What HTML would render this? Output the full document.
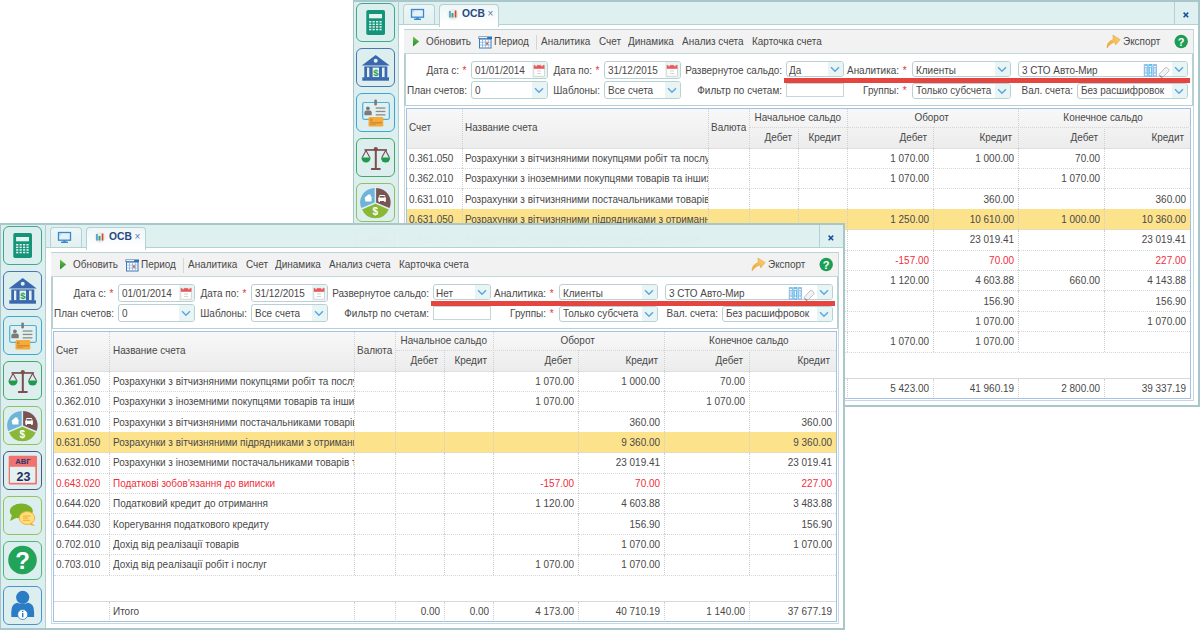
<!DOCTYPE html>
<html><head><meta charset="utf-8"><title>ОСВ</title>
<style>
html,body{margin:0;padding:0;}
body{width:1200px;height:630px;overflow:hidden;background:#fff;position:relative;font-family:"Liberation Sans",sans-serif;}
.w{position:absolute;overflow:hidden;}
.a{position:absolute;}
.t{position:absolute;white-space:nowrap;font-size:11.5px;line-height:11.5px;color:#484848;transform:scaleX(.865);transform-origin:0 0;}
svg.a{overflow:visible;}
</style></head><body>

<div class="w" style="left:353px;top:0px;width:847px;height:407px;opacity:1;">
<div class="a" style="left:46.00px;top:25.00px;width:801.00px;height:382.00px;background:#fff;"></div>
<div class="a" style="left:0.00px;top:0.00px;width:46.00px;height:407.00px;background:#dcefee;"></div>
<div class="a" style="left:0.00px;top:0.00px;width:847.00px;height:1.50px;background:#a9c6ca;"></div>
<div class="a" style="left:0.00px;top:0.00px;width:1.00px;height:407.00px;background:#a9c6ca;"></div>
<div class="a" style="left:845.00px;top:0.00px;width:2.00px;height:407.00px;background:#a9c6ca;"></div>
<div class="a" style="left:0.00px;top:405.00px;width:847.00px;height:2.00px;background:#a9c6ca;"></div>
<div class="a" style="left:45.00px;top:1.00px;width:1.00px;height:404.00px;background:#b1cfd1;"></div>
<div class="a" style="left:3px;top:3px;width:37px;height:37px;border:1.3px solid #3ea891;border-radius:6px;"></div>
<svg class="a" style="left:2px;top:2px" width="42" height="42" viewBox="0 0 42 42"><rect x="11.3" y="7.9" width="18.7" height="25.2" rx="1.8" fill="#14957a"/>
<rect x="14.1" y="12" width="12.9" height="4.3" fill="#e6f4f1"/>
<rect x="14.10" y="19.00" width="2.2" height="1.5" fill="#e6f4f1"/><rect x="17.55" y="19.00" width="2.2" height="1.5" fill="#e6f4f1"/><rect x="21.00" y="19.00" width="2.2" height="1.5" fill="#e6f4f1"/><rect x="24.45" y="19.00" width="2.2" height="1.5" fill="#e6f4f1"/><rect x="14.10" y="21.60" width="2.2" height="1.5" fill="#e6f4f1"/><rect x="17.55" y="21.60" width="2.2" height="1.5" fill="#e6f4f1"/><rect x="21.00" y="21.60" width="2.2" height="1.5" fill="#e6f4f1"/><rect x="24.45" y="21.60" width="2.2" height="1.5" fill="#e6f4f1"/><rect x="14.10" y="24.20" width="2.2" height="1.5" fill="#e6f4f1"/><rect x="17.55" y="24.20" width="2.2" height="1.5" fill="#e6f4f1"/><rect x="21.00" y="24.20" width="2.2" height="1.5" fill="#e6f4f1"/><rect x="24.45" y="24.20" width="2.2" height="1.5" fill="#e6f4f1"/><rect x="14.10" y="26.80" width="2.2" height="1.5" fill="#e6f4f1"/><rect x="17.55" y="26.80" width="2.2" height="1.5" fill="#e6f4f1"/><rect x="21.00" y="26.80" width="2.2" height="1.5" fill="#e6f4f1"/><rect x="24.45" y="26.80" width="2.2" height="1.5" fill="#e6f4f1"/></svg>
<div class="a" style="left:3px;top:48px;width:37px;height:37px;border:1.3px solid #4a76b6;border-radius:6px;"></div>
<svg class="a" style="left:2px;top:47px" width="42" height="42" viewBox="0 0 42 42"><path d="M20.7 8 L34.7 18.4 L6.8 18.4 Z" fill="#3a67ae"/>
<circle cx="20.7" cy="13.7" r="2" fill="#e2f1f0"/>
<rect x="9.3" y="19.4" width="23" height="11.4" fill="#3a67ae"/>
<rect x="12" y="20.6" width="2.3" height="9.6" fill="#e2f1f0"/>
<rect x="17.6" y="20.6" width="6.4" height="9.6" fill="#e2f1f0"/>
<rect x="27" y="20.6" width="2.6" height="9.6" fill="#e2f1f0"/>
<rect x="7.3" y="30.3" width="26.7" height="3.4" fill="#3a67ae"/>
<text x="20.9" y="28.6" font-size="9.5" font-weight="bold" text-anchor="middle" fill="#22a24a" font-family="Liberation Sans">$</text></svg>
<div class="a" style="left:3px;top:93px;width:37px;height:37px;border:1.3px solid #3aa8d4;border-radius:6px;"></div>
<svg class="a" style="left:2px;top:92px" width="42" height="42" viewBox="0 0 42 42"><rect x="7.7" y="10.5" width="26.6" height="16.8" rx="1.5" fill="#e2f1f0" stroke="#4ab0dc" stroke-width="1.2"/>
<rect x="19.3" y="7.6" width="2.6" height="5.9" rx="1.2" fill="#7a7a7a"/>
<circle cx="12.9" cy="16.3" r="1.9" fill="#7a7a7a"/>
<path d="M9.4 23.2 v-2.6 q0-2 2-2 h3.3 q2 0 2 2 v2.6z" fill="#7a7a7a"/>
<rect x="20.7" y="15.4" width="9.7" height="1.3" fill="#8a8a8a"/>
<rect x="20.7" y="18.8" width="9.7" height="1.3" fill="#8a8a8a"/>
<rect x="20.7" y="22.2" width="9.7" height="1.3" fill="#8a8a8a"/>
<rect x="13.5" y="25" width="14.8" height="9.6" rx="1.3" fill="#f6aa3a"/>
<rect x="15" y="26.7" width="2.5" height="2.5" fill="#c89040"/>
<rect x="15" y="30.4" width="12" height="0.9" fill="#b87a30"/>
<rect x="15" y="32.1" width="6" height="0.7" fill="#c88a40"/></svg>
<div class="a" style="left:3px;top:138px;width:37px;height:37px;border:1.3px solid #45a869;border-radius:6px;"></div>
<svg class="a" style="left:2px;top:137px" width="42" height="42" viewBox="0 0 42 42"><rect x="19.8" y="12" width="2" height="20" fill="#7c4e4e"/>
<path d="M9.5 12.1 H32 V13.8 H9.5z" fill="#7c4e4e"/>
<circle cx="20.8" cy="12.2" r="2.1" fill="#7c4e4e"/>
<rect x="15.8" y="30.9" width="10" height="2" rx="1" fill="#7c4e4e"/>
<path d="M11 13.4 L7.2 20.6 M11 13.4 L14.8 20.6 M30.6 13.4 L26.8 20.6 M30.6 13.4 L34.4 20.6" stroke="#7c4e4e" stroke-width="1.1" fill="none"/>
<path d="M6.4 20.6 h9.2 a4.6 5 0 0 1 -9.2 0z" fill="#1e9a4a"/>
<path d="M26 20.6 h9.2 a4.6 5 0 0 1 -9.2 0z" fill="#1e9a4a"/></svg>
<div class="a" style="left:3px;top:183px;width:37px;height:37px;border:1.3px solid #8fc15c;border-radius:6px;"></div>
<svg class="a" style="left:2px;top:182px" width="42" height="42" viewBox="0 0 42 42"><path d="M19.65 20.40 L6.30 26.07 A14.5 14.5 0 0 1 19.65 5.90 Z" fill="#6db4d8"/><path d="M21.15 20.40 L21.15 5.90 A14.5 14.5 0 0 1 34.50 26.07 Z" fill="#7a5353"/><path d="M20.40 21.80 L33.75 27.47 A14.5 14.5 0 0 1 7.05 27.47 Z" fill="#8ab836"/><path d="M9.6 15.8 l3.9-3.6 l3.9 3.6 h-0.9 v3.6 h-6z" fill="#fff"/><rect x="14.3" y="12.4" width="1.3" height="2.2" fill="#fff"/>
<path d="M23.3 16.3 l1.3-3.3 h5 l1.3 3.3 v2.8 h-7.6z" fill="#fff"/><rect x="23.6" y="18.6" width="1.4" height="1.4" fill="#fff"/><rect x="29.2" y="18.6" width="1.4" height="1.4" fill="#fff"/>
<rect x="24.6" y="14" width="5" height="1.6" fill="#7a5353"/>
<text x="20.4" y="32.6" font-size="10" font-weight="bold" text-anchor="middle" fill="#fff" font-family="Liberation Sans">$</text></svg>
<div class="a" style="left:3px;top:228px;width:37px;height:37px;border:1.3px solid #4a5682;border-radius:6px;"></div>
<svg class="a" style="left:2px;top:227px" width="42" height="42" viewBox="0 0 42 42"><rect x="6.7" y="5.8" width="28.3" height="28.6" rx="1" fill="#f27272"/>
<rect x="8" y="16.8" width="25.3" height="16" fill="#e4f1f1"/>
<text x="21" y="14.4" font-size="7" font-weight="bold" text-anchor="middle" fill="#2a3a6a" font-family="Liberation Sans" textLength="15.5" lengthAdjust="spacingAndGlyphs">АВГ</text>
<text x="21.5" y="31" font-size="12.5" font-weight="bold" text-anchor="middle" fill="#1e2e60" font-family="Liberation Sans">23</text></svg>
<div class="a" style="left:3px;top:273px;width:37px;height:37px;border:1.3px solid #92c45e;border-radius:6px;"></div>
<svg class="a" style="left:2px;top:272px" width="42" height="42" viewBox="0 0 42 42"><ellipse cx="19.3" cy="16" rx="11.5" ry="7.5" fill="#7ab22a"/>
<path d="M10 20 L8 26 L16 22z" fill="#7ab22a"/>
<ellipse cx="25" cy="23" rx="7.7" ry="6.5" fill="#fde07a" stroke="#f6a832" stroke-width="0.9"/>
<path d="M29 27.5 L33.3 31 L28 30z" fill="#f6a832"/>
<rect x="21" y="20.6" width="7.5" height="0.9" fill="#f0a030"/>
<rect x="21" y="22.6" width="5" height="0.9" fill="#f0a030"/>
<rect x="21" y="24.8" width="7" height="0.9" fill="#f0a030"/></svg>
<div class="a" style="left:3px;top:318px;width:37px;height:37px;border:1.3px solid #4cb87a;border-radius:6px;"></div>
<svg class="a" style="left:2px;top:317px" width="42" height="42" viewBox="0 0 42 42"><circle cx="20.5" cy="20" r="14.3" fill="#22a35a"/>
<text x="20.5" y="29" font-size="24" font-weight="bold" text-anchor="middle" fill="#fff" font-family="Liberation Sans">?</text></svg>
<div class="a" style="left:3px;top:363px;width:37px;height:37px;border:1.3px solid #4a92d2;border-radius:6px;"></div>
<svg class="a" style="left:2px;top:362px" width="42" height="42" viewBox="0 0 42 42"><circle cx="20.7" cy="12.3" r="6.6" fill="#2a7cc4"/>
<path d="M9.3 27 q0-8.5 6-9.3 q5.4 2.6 10.8 0 q6 0.8 6 9.3 v5 h-22.8z" fill="#2a7cc4"/>
<circle cx="20.7" cy="29.5" r="5" fill="#fff" stroke="#2a7cc4" stroke-width="0.8"/>
<rect x="20" y="28" width="1.4" height="4.3" fill="#2a7cc4"/>
<circle cx="20.7" cy="26.5" r="0.8" fill="#2a7cc4"/></svg>
<div class="a" style="left:46.00px;top:1.50px;width:799.00px;height:22.50px;background:rgba(222,240,240,0.985);"></div>
<div class="a" style="left:46.00px;top:24.00px;width:799.00px;height:1.00px;background:#b5d1d3;"></div>
<div class="a" style="left:50px;top:3.5px;width:30px;height:19.5px;border:1px solid #b5d1d3;border-bottom:none;border-radius:4px 4px 0 0;background:linear-gradient(#eef7f7,#e2f0f0);"></div>
<svg class="a" style="left:57px;top:8px" width="16" height="13" viewBox="0 0 16 13"><rect x="1.5" y="1.5" width="12" height="7.7" fill="#e6f1f5" stroke="#3a88cc" stroke-width="1.3"/><path d="M2.2 2.2 h3 l-3 3z" fill="#a8d0f0"/><rect x="6.3" y="9.5" width="2.4" height="1.5" fill="#3a88cc"/><rect x="4" y="10.6" width="7" height="1.4" rx="0.6" fill="#3a88cc"/></svg>
<div class="a" style="left:85.8px;top:3.5px;width:58.7px;height:22px;border:1px solid #b5d1d3;border-bottom:none;border-radius:4px 4px 0 0;background:linear-gradient(#eef6f7,#fff 85%);"></div>
<svg class="a" style="left:93px;top:8px" width="14" height="14" viewBox="0 0 14 14"><circle cx="7" cy="6.3" r="5.6" fill="#ececec"/><rect x="3.2" y="3" width="1.5" height="6.5" fill="#3a94c8"/><rect x="5.5" y="5" width="2" height="4.5" fill="#3aa07a"/><rect x="8.7" y="2.5" width="1.7" height="7" fill="#d84a30"/></svg>
<div class="t" style="left:108.70px;top:8.46px;font-size:10.8px;line-height:10.8px;color:#284a80;font-weight:bold;transform:scaleX(0.95);">ОСВ</div>
<div class="t" style="left:134.5px;top:9px;font-size:10px;line-height:10px;color:#5a78b8;transform:none">×</div>
<div class="a" style="left:821.00px;top:1.50px;width:1.00px;height:22.50px;background:#b5d1d3;"></div>
<svg class="a" style="left:828.5px;top:10.5px" width="8" height="8" viewBox="0 0 8 8"><path d="M1.6 1.6 L6.2 6.2 M6.2 1.6 L1.6 6.2" stroke="#1a4e9e" stroke-width="1.5"/></svg>
<div class="a" style="left:50.50px;top:29.00px;width:790.00px;height:372.00px;border:1px solid #c3d9db;box-sizing:border-box;background:#fff;"></div>
<div class="a" style="left:51.00px;top:29.00px;width:789.00px;height:25.00px;background:#f2f2f2;border-top:1px solid #bcd3d6;border-bottom:1px solid #c3d9db;box-sizing:border-box;"></div>
<div class="a" style="left:51.00px;top:54.00px;width:1.50px;height:51.00px;background:#b7d0d4;"></div>
<div class="a" style="left:839.00px;top:54.00px;width:1.50px;height:51.00px;background:#b7d0d4;"></div>
<div class="a" style="left:51.00px;top:104.50px;width:789.00px;height:1.00px;background:#b7d0d4;"></div>
<svg class="a" style="left:59px;top:36px" width="9" height="12" viewBox="0 0 9 12"><defs><linearGradient id="pg" x1="0" x2="0" y1="0" y2="1"><stop offset="0" stop-color="#6cc24a"/><stop offset="1" stop-color="#1e8a2a"/></linearGradient></defs><path d="M1 0.6 L7.2 5.6 L1 10.6z" fill="url(#pg)"/></svg>
<div class="t" style="left:72.70px;top:35.97px;">Обновить</div>
<svg class="a" style="left:124.5px;top:35.5px" width="15" height="13" viewBox="0 0 15 13"><rect x="0.5" y="0.5" width="13.5" height="2.6" fill="#2f6fb0"/><rect x="1.2" y="1.1" width="8" height="1.2" fill="#fff"/><rect x="1.5" y="3.1" width="11.5" height="8.9" fill="#fff" stroke="#3a7ab8" stroke-width="1"/><path d="M4.5 3.5 v8.4 M7.5 3.5 v8.4 M10.3 3.5 v8.4 M1.7 6.2 h11 M1.7 9 h11" stroke="#8ab0d8" stroke-width="0.8"/><rect x="8" y="6.6" width="2" height="2" fill="#e05a3a"/></svg>
<div class="t" style="left:140.90px;top:35.97px;">Период</div>
<div class="a" style="left:182.50px;top:35.00px;width:1.00px;height:15.00px;background:#d6d6d6;"></div>
<div class="t" style="left:188.40px;top:35.97px;">Аналитика</div>
<div class="t" style="left:245.50px;top:35.97px;">Счет</div>
<div class="t" style="left:274.60px;top:35.97px;">Динамика</div>
<div class="t" style="left:329.20px;top:35.97px;">Анализ счета</div>
<div class="t" style="left:398.60px;top:35.97px;">Карточка счета</div>
<svg class="a" style="left:753px;top:34px" width="16" height="15" viewBox="0 0 16 15"><defs><linearGradient id="egback" x1="0" x2="1" y1="1" y2="0"><stop offset="0" stop-color="#f0a828"/><stop offset="1" stop-color="#f8d080"/></linearGradient></defs><path d="M1.1 13.9 C0.9 9.8 3 7 7.2 5.6 L6.9 1.1 L14.2 5.6 L9.6 10.9 L8.9 8 C5.6 9 3.2 10.8 1.1 13.9Z" fill="url(#egback)" stroke="#e09a28" stroke-width="0.45"/></svg>
<div class="t" style="left:770.00px;top:35.97px;">Экспорт</div>
<svg class="a" style="left:821px;top:34px" width="15" height="15" viewBox="0 0 15 15"><circle cx="7.2" cy="7.5" r="6.7" fill="#1e9e55"/><text x="7.2" y="11.6" font-size="11" font-weight="bold" text-anchor="middle" fill="#fff" font-family="Liberation Sans">?</text></svg>
<div class="t" style="left:-94.20px;width:200px;top:64.87px;text-align:right;transform-origin:100% 0;">Дата с:</div>
<div class="t" style="left:109.50px;top:65.64px;font-size:10px;line-height:10px;color:#e8303a;transform:scaleX(1);">*</div>
<div class="a" style="left:118.10px;top:61.10px;width:76.70px;height:17.65px;border:1px solid #b9d0d4;box-sizing:border-box;border-radius:3px;background:#fff;overflow:hidden">
<div class="a" style="right:0;top:0;bottom:0;width:15px;background:#e9f4f4;"></div>
<svg class="a" style="right:2px;top:2px" width="12" height="13" viewBox="0 0 12 13"><rect x="0.8" y="1.2" width="10.6" height="11" fill="#fff" stroke="#cfcfcf" stroke-width="0.8"/><rect x="0.8" y="1.2" width="10.6" height="3.6" fill="#e85a5a"/><rect x="2.5" y="0.3" width="1.2" height="2" fill="#fff"/><rect x="8.3" y="0.3" width="1.2" height="2" fill="#fff"/><path d="M4 7 h4 M4 9.5 h4" stroke="#c8c8c8" stroke-width="0.8"/></svg>
</div>
<div class="t" style="left:121.60px;top:64.87px;">01/01/2014</div>
<div class="t" style="left:39.20px;width:200px;top:64.87px;text-align:right;transform-origin:100% 0;">Дата по:</div>
<div class="t" style="left:242.40px;top:65.64px;font-size:10px;line-height:10px;color:#e8303a;transform:scaleX(1);">*</div>
<div class="a" style="left:251.00px;top:61.10px;width:76.50px;height:17.65px;border:1px solid #b9d0d4;box-sizing:border-box;border-radius:3px;background:#fff;overflow:hidden">
<div class="a" style="right:0;top:0;bottom:0;width:15px;background:#e9f4f4;"></div>
<svg class="a" style="right:2px;top:2px" width="12" height="13" viewBox="0 0 12 13"><rect x="0.8" y="1.2" width="10.6" height="11" fill="#fff" stroke="#cfcfcf" stroke-width="0.8"/><rect x="0.8" y="1.2" width="10.6" height="3.6" fill="#e85a5a"/><rect x="2.5" y="0.3" width="1.2" height="2" fill="#fff"/><rect x="8.3" y="0.3" width="1.2" height="2" fill="#fff"/><path d="M4 7 h4 M4 9.5 h4" stroke="#c8c8c8" stroke-width="0.8"/></svg>
</div>
<div class="t" style="left:254.50px;top:64.87px;">31/12/2015</div>
<div class="t" style="left:228.50px;width:200px;top:64.87px;text-align:right;transform-origin:100% 0;">Развернутое сальдо:</div>
<div class="a" style="left:432.50px;top:61.40px;width:58.30px;height:15.80px;border:1px solid #b9d0d4;box-sizing:border-box;border-radius:3px;background:#fff;overflow:hidden">
<div class="a" style="right:0;top:0;bottom:0;width:15px;background:#e9f4f4;"></div>
<svg class="a" style="right:3px;top:3.60px" width="10" height="7" viewBox="0 0 10 7"><path d="M1 1.3 L5 5.2 L9 1.3" stroke="#5aaae0" stroke-width="1.5" fill="none"/></svg>
</div>
<div class="t" style="left:436.00px;top:64.87px;">Да</div>
<div class="t" style="left:346.00px;width:200px;top:64.87px;text-align:right;transform-origin:100% 0;">Аналитика:</div>
<div class="t" style="left:549.70px;top:65.64px;font-size:10px;line-height:10px;color:#e8303a;transform:scaleX(1);">*</div>
<div class="a" style="left:559.00px;top:61.40px;width:98.50px;height:15.80px;border:1px solid #b9d0d4;box-sizing:border-box;border-radius:3px;background:#fff;overflow:hidden">
<div class="a" style="right:0;top:0;bottom:0;width:15px;background:#e9f4f4;"></div>
<svg class="a" style="right:3px;top:3.60px" width="10" height="7" viewBox="0 0 10 7"><path d="M1 1.3 L5 5.2 L9 1.3" stroke="#5aaae0" stroke-width="1.5" fill="none"/></svg>
</div>
<div class="t" style="left:562.50px;top:64.87px;">Клиенты</div>
<div class="a" style="left:665.00px;top:61.20px;width:169.50px;height:16.10px;border:1px solid #b9d0d4;box-sizing:border-box;border-radius:3px;background:#fff;overflow:hidden">
<div class="a" style="right:0;top:0;bottom:0;width:15px;background:#e9f4f4;"></div>
<svg class="a" style="right:3px;top:3.75px" width="10" height="7" viewBox="0 0 10 7"><path d="M1 1.3 L5 5.2 L9 1.3" stroke="#5aaae0" stroke-width="1.5" fill="none"/></svg>
</div>
<div class="t" style="left:668.50px;top:64.87px;">3 СТО Авто-Мир</div>
<svg class="a" style="left:789.5px;top:62.5px" width="28" height="15" viewBox="0 0 28 15"><rect x="0.8" y="1" width="4.2" height="13" rx="0.7" fill="#94c0e8"/><rect x="5.3" y="1" width="4.2" height="13" rx="0.7" fill="#66c0ec"/><rect x="9.8" y="1" width="4.2" height="13" rx="0.7" fill="#94c0e8"/><path d="M1.8 3.6 h2.2 M6.3 3.6 h2.2 M10.8 3.6 h2.2 M2.9 5 v4.5 M7.4 5 v4.5 M11.9 5 v4.5" stroke="#fff" stroke-width="1"/><circle cx="2.9" cy="11.6" r="1" fill="#fff"/><circle cx="7.4" cy="11.6" r="1" fill="#fff"/><circle cx="11.9" cy="11.6" r="1" fill="#fff"/><path d="M16.3 11 L22 5 q1.2-1.1 2.4 0 l1.2 1.1 q1.1 1.1 0 2.3 L20 14 q-1.1 0.9 -2.2 0 l-1.4-1.3 q-0.8-0.8 -0.1-1.7z" fill="#f2f2f6" stroke="#a8a8b0" stroke-width="0.7"/><path d="M16.8 12.5 l1.2 1.2 q0.7 0.4 1.4-0.1" stroke="#555" stroke-width="0.9" fill="none"/></svg>
<div class="t" style="left:228.50px;width:200px;top:84.87px;text-align:right;transform-origin:100% 0;">Фильтр по счетам:</div>
<div class="a" style="left:432.5px;top:83px;width:58.3px;height:14px;border:1px solid #c3d6da;box-sizing:border-box;background:#fff"></div>
<div class="t" style="left:-86.20px;width:200px;top:84.87px;text-align:right;transform-origin:100% 0;">План счетов:</div>
<div class="a" style="left:118.10px;top:81.40px;width:76.70px;height:18.00px;border:1px solid #b9d0d4;box-sizing:border-box;border-radius:3px;background:#fff;overflow:hidden">
<div class="a" style="right:0;top:0;bottom:0;width:15px;background:#e9f4f4;"></div>
<svg class="a" style="right:3px;top:4.70px" width="10" height="7" viewBox="0 0 10 7"><path d="M1 1.3 L5 5.2 L9 1.3" stroke="#5aaae0" stroke-width="1.5" fill="none"/></svg>
</div>
<div class="t" style="left:121.60px;top:84.87px;">0</div>
<div class="t" style="left:46.70px;width:200px;top:84.87px;text-align:right;transform-origin:100% 0;">Шаблоны:</div>
<div class="a" style="left:251.00px;top:81.40px;width:76.50px;height:18.00px;border:1px solid #b9d0d4;box-sizing:border-box;border-radius:3px;background:#fff;overflow:hidden">
<div class="a" style="right:0;top:0;bottom:0;width:15px;background:#e9f4f4;"></div>
<svg class="a" style="right:3px;top:4.70px" width="10" height="7" viewBox="0 0 10 7"><path d="M1 1.3 L5 5.2 L9 1.3" stroke="#5aaae0" stroke-width="1.5" fill="none"/></svg>
</div>
<div class="t" style="left:254.50px;top:84.87px;">Все счета</div>
<div class="t" style="left:346.00px;width:200px;top:84.87px;text-align:right;transform-origin:100% 0;">Группы:</div>
<div class="t" style="left:549.70px;top:85.64px;font-size:10px;line-height:10px;color:#e8303a;transform:scaleX(1);">*</div>
<div class="a" style="left:559.00px;top:82.80px;width:98.50px;height:16.10px;border:1px solid #b9d0d4;box-sizing:border-box;border-radius:3px;background:#fff;overflow:hidden">
<div class="a" style="right:0;top:0;bottom:0;width:15px;background:#e9f4f4;"></div>
<svg class="a" style="right:3px;top:3.75px" width="10" height="7" viewBox="0 0 10 7"><path d="M1 1.3 L5 5.2 L9 1.3" stroke="#5aaae0" stroke-width="1.5" fill="none"/></svg>
</div>
<div class="t" style="left:562.50px;top:84.87px;">Только субсчета</div>
<div class="t" style="left:519.50px;width:200px;top:84.87px;text-align:right;transform-origin:100% 0;">Вал. счета:</div>
<div class="a" style="left:724.00px;top:82.80px;width:110.50px;height:16.70px;border:1px solid #b9d0d4;box-sizing:border-box;border-radius:3px;background:#fff;overflow:hidden">
<div class="a" style="right:0;top:0;bottom:0;width:15px;background:#e9f4f4;"></div>
<svg class="a" style="right:3px;top:4.05px" width="10" height="7" viewBox="0 0 10 7"><path d="M1 1.3 L5 5.2 L9 1.3" stroke="#5aaae0" stroke-width="1.5" fill="none"/></svg>
</div>
<div class="t" style="left:727.50px;top:84.87px;">Без расшифровок</div>
<div class="a" style="left:430.50px;top:78.00px;width:406.80px;height:4.50px;background:#e5443f;"></div>
<div class="a" style="left:52.50px;top:107.50px;width:785.80px;height:291.00px;border:1px solid #a3c0e6;box-sizing:border-box;background:#fff;"></div>
<div class="a" style="left:53.50px;top:108.50px;width:783.80px;height:39.50px;background:linear-gradient(#f8f8f8,#ececec);"></div>
<div class="a" style="left:53.50px;top:147.50px;width:783.80px;height:1.00px;background:#e0e0e0;"></div>
<div class="a" style="left:108.50px;top:108.50px;width:0;height:39.50px;border-left:1px dotted #d0d0d0;"></div>
<div class="a" style="left:354.50px;top:108.50px;width:0;height:39.50px;border-left:1px dotted #d0d0d0;"></div>
<div class="a" style="left:396.00px;top:108.50px;width:0;height:39.50px;border-left:1px dotted #d0d0d0;"></div>
<div class="a" style="left:494.00px;top:108.50px;width:0;height:39.50px;border-left:1px dotted #d0d0d0;"></div>
<div class="a" style="left:665.20px;top:108.50px;width:0;height:39.50px;border-left:1px dotted #d0d0d0;"></div>
<div class="a" style="left:445.00px;top:127.40px;width:0;height:20.60px;border-left:1px dotted #d0d0d0;"></div>
<div class="a" style="left:579.80px;top:127.40px;width:0;height:20.60px;border-left:1px dotted #d0d0d0;"></div>
<div class="a" style="left:751.20px;top:127.40px;width:0;height:20.60px;border-left:1px dotted #d0d0d0;"></div>
<div class="a" style="left:396.50px;top:126.90px;width:441.30px;height:0;border-top:1px dotted #d6d6d6;"></div>
<div class="t" style="left:55.70px;top:121.87px;">Счет</div>
<div class="t" style="left:112.20px;top:121.87px;">Название счета</div>
<div class="t" style="left:358.20px;top:122.07px;">Валюта</div>
<div class="t" style="left:395.00px;width:98.00px;top:112.47px;text-align:center;transform-origin:50% 0;">Начальное сальдо</div>
<div class="t" style="left:493.00px;width:171.20px;top:112.47px;text-align:center;transform-origin:50% 0;">Оборот</div>
<div class="t" style="left:664.20px;width:172.10px;top:112.47px;text-align:center;transform-origin:50% 0;">Конечное сальдо</div>
<div class="t" style="left:238.90px;width:200px;top:132.37px;text-align:right;transform-origin:100% 0;">Дебет</div>
<div class="t" style="left:287.90px;width:200px;top:132.37px;text-align:right;transform-origin:100% 0;">Кредит</div>
<div class="t" style="left:373.70px;width:200px;top:132.37px;text-align:right;transform-origin:100% 0;">Дебет</div>
<div class="t" style="left:459.10px;width:200px;top:132.37px;text-align:right;transform-origin:100% 0;">Кредит</div>
<div class="t" style="left:545.10px;width:200px;top:132.37px;text-align:right;transform-origin:100% 0;">Дебет</div>
<div class="t" style="left:631.20px;width:200px;top:132.37px;text-align:right;transform-origin:100% 0;">Кредит</div>
<div class="a" style="left:53.50px;top:167.90px;width:783.80px;height:0;border-top:1px dotted #d6d6d6;"></div>
<div class="a" style="left:108.50px;top:148.00px;width:0;height:20.40px;border-left:1px dotted #d0d0d0;"></div>
<div class="a" style="left:354.50px;top:148.00px;width:0;height:20.40px;border-left:1px dotted #d0d0d0;"></div>
<div class="a" style="left:396.00px;top:148.00px;width:0;height:20.40px;border-left:1px dotted #d0d0d0;"></div>
<div class="a" style="left:445.00px;top:148.00px;width:0;height:20.40px;border-left:1px dotted #d0d0d0;"></div>
<div class="a" style="left:494.00px;top:148.00px;width:0;height:20.40px;border-left:1px dotted #d0d0d0;"></div>
<div class="a" style="left:579.80px;top:148.00px;width:0;height:20.40px;border-left:1px dotted #d0d0d0;"></div>
<div class="a" style="left:665.20px;top:148.00px;width:0;height:20.40px;border-left:1px dotted #d0d0d0;"></div>
<div class="a" style="left:751.20px;top:148.00px;width:0;height:20.40px;border-left:1px dotted #d0d0d0;"></div>
<div class="a" style="left:53.50px;top:188.30px;width:783.80px;height:0;border-top:1px dotted #d6d6d6;"></div>
<div class="a" style="left:108.50px;top:168.40px;width:0;height:20.40px;border-left:1px dotted #d0d0d0;"></div>
<div class="a" style="left:354.50px;top:168.40px;width:0;height:20.40px;border-left:1px dotted #d0d0d0;"></div>
<div class="a" style="left:396.00px;top:168.40px;width:0;height:20.40px;border-left:1px dotted #d0d0d0;"></div>
<div class="a" style="left:445.00px;top:168.40px;width:0;height:20.40px;border-left:1px dotted #d0d0d0;"></div>
<div class="a" style="left:494.00px;top:168.40px;width:0;height:20.40px;border-left:1px dotted #d0d0d0;"></div>
<div class="a" style="left:579.80px;top:168.40px;width:0;height:20.40px;border-left:1px dotted #d0d0d0;"></div>
<div class="a" style="left:665.20px;top:168.40px;width:0;height:20.40px;border-left:1px dotted #d0d0d0;"></div>
<div class="a" style="left:751.20px;top:168.40px;width:0;height:20.40px;border-left:1px dotted #d0d0d0;"></div>
<div class="a" style="left:53.50px;top:208.70px;width:783.80px;height:0;border-top:1px dotted #d6d6d6;"></div>
<div class="a" style="left:108.50px;top:188.80px;width:0;height:20.40px;border-left:1px dotted #d0d0d0;"></div>
<div class="a" style="left:354.50px;top:188.80px;width:0;height:20.40px;border-left:1px dotted #d0d0d0;"></div>
<div class="a" style="left:396.00px;top:188.80px;width:0;height:20.40px;border-left:1px dotted #d0d0d0;"></div>
<div class="a" style="left:445.00px;top:188.80px;width:0;height:20.40px;border-left:1px dotted #d0d0d0;"></div>
<div class="a" style="left:494.00px;top:188.80px;width:0;height:20.40px;border-left:1px dotted #d0d0d0;"></div>
<div class="a" style="left:579.80px;top:188.80px;width:0;height:20.40px;border-left:1px dotted #d0d0d0;"></div>
<div class="a" style="left:665.20px;top:188.80px;width:0;height:20.40px;border-left:1px dotted #d0d0d0;"></div>
<div class="a" style="left:751.20px;top:188.80px;width:0;height:20.40px;border-left:1px dotted #d0d0d0;"></div>
<div class="a" style="left:53.50px;top:209.20px;width:783.80px;height:20.40px;background:#fde28c;"></div>
<div class="a" style="left:53.50px;top:229.10px;width:783.80px;height:0;border-top:1px dotted #d6d6d6;"></div>
<div class="a" style="left:108.50px;top:209.20px;width:0;height:20.40px;border-left:1px dotted #d0d0d0;"></div>
<div class="a" style="left:354.50px;top:209.20px;width:0;height:20.40px;border-left:1px dotted #d0d0d0;"></div>
<div class="a" style="left:396.00px;top:209.20px;width:0;height:20.40px;border-left:1px dotted #d0d0d0;"></div>
<div class="a" style="left:445.00px;top:209.20px;width:0;height:20.40px;border-left:1px dotted #d0d0d0;"></div>
<div class="a" style="left:494.00px;top:209.20px;width:0;height:20.40px;border-left:1px dotted #d0d0d0;"></div>
<div class="a" style="left:579.80px;top:209.20px;width:0;height:20.40px;border-left:1px dotted #d0d0d0;"></div>
<div class="a" style="left:665.20px;top:209.20px;width:0;height:20.40px;border-left:1px dotted #d0d0d0;"></div>
<div class="a" style="left:751.20px;top:209.20px;width:0;height:20.40px;border-left:1px dotted #d0d0d0;"></div>
<div class="a" style="left:53.50px;top:249.50px;width:783.80px;height:0;border-top:1px dotted #d6d6d6;"></div>
<div class="a" style="left:108.50px;top:229.60px;width:0;height:20.40px;border-left:1px dotted #d0d0d0;"></div>
<div class="a" style="left:354.50px;top:229.60px;width:0;height:20.40px;border-left:1px dotted #d0d0d0;"></div>
<div class="a" style="left:396.00px;top:229.60px;width:0;height:20.40px;border-left:1px dotted #d0d0d0;"></div>
<div class="a" style="left:445.00px;top:229.60px;width:0;height:20.40px;border-left:1px dotted #d0d0d0;"></div>
<div class="a" style="left:494.00px;top:229.60px;width:0;height:20.40px;border-left:1px dotted #d0d0d0;"></div>
<div class="a" style="left:579.80px;top:229.60px;width:0;height:20.40px;border-left:1px dotted #d0d0d0;"></div>
<div class="a" style="left:665.20px;top:229.60px;width:0;height:20.40px;border-left:1px dotted #d0d0d0;"></div>
<div class="a" style="left:751.20px;top:229.60px;width:0;height:20.40px;border-left:1px dotted #d0d0d0;"></div>
<div class="a" style="left:53.50px;top:269.90px;width:783.80px;height:0;border-top:1px dotted #d6d6d6;"></div>
<div class="a" style="left:108.50px;top:250.00px;width:0;height:20.40px;border-left:1px dotted #d0d0d0;"></div>
<div class="a" style="left:354.50px;top:250.00px;width:0;height:20.40px;border-left:1px dotted #d0d0d0;"></div>
<div class="a" style="left:396.00px;top:250.00px;width:0;height:20.40px;border-left:1px dotted #d0d0d0;"></div>
<div class="a" style="left:445.00px;top:250.00px;width:0;height:20.40px;border-left:1px dotted #d0d0d0;"></div>
<div class="a" style="left:494.00px;top:250.00px;width:0;height:20.40px;border-left:1px dotted #d0d0d0;"></div>
<div class="a" style="left:579.80px;top:250.00px;width:0;height:20.40px;border-left:1px dotted #d0d0d0;"></div>
<div class="a" style="left:665.20px;top:250.00px;width:0;height:20.40px;border-left:1px dotted #d0d0d0;"></div>
<div class="a" style="left:751.20px;top:250.00px;width:0;height:20.40px;border-left:1px dotted #d0d0d0;"></div>
<div class="a" style="left:53.50px;top:290.30px;width:783.80px;height:0;border-top:1px dotted #d6d6d6;"></div>
<div class="a" style="left:108.50px;top:270.40px;width:0;height:20.40px;border-left:1px dotted #d0d0d0;"></div>
<div class="a" style="left:354.50px;top:270.40px;width:0;height:20.40px;border-left:1px dotted #d0d0d0;"></div>
<div class="a" style="left:396.00px;top:270.40px;width:0;height:20.40px;border-left:1px dotted #d0d0d0;"></div>
<div class="a" style="left:445.00px;top:270.40px;width:0;height:20.40px;border-left:1px dotted #d0d0d0;"></div>
<div class="a" style="left:494.00px;top:270.40px;width:0;height:20.40px;border-left:1px dotted #d0d0d0;"></div>
<div class="a" style="left:579.80px;top:270.40px;width:0;height:20.40px;border-left:1px dotted #d0d0d0;"></div>
<div class="a" style="left:665.20px;top:270.40px;width:0;height:20.40px;border-left:1px dotted #d0d0d0;"></div>
<div class="a" style="left:751.20px;top:270.40px;width:0;height:20.40px;border-left:1px dotted #d0d0d0;"></div>
<div class="a" style="left:53.50px;top:310.70px;width:783.80px;height:0;border-top:1px dotted #d6d6d6;"></div>
<div class="a" style="left:108.50px;top:290.80px;width:0;height:20.40px;border-left:1px dotted #d0d0d0;"></div>
<div class="a" style="left:354.50px;top:290.80px;width:0;height:20.40px;border-left:1px dotted #d0d0d0;"></div>
<div class="a" style="left:396.00px;top:290.80px;width:0;height:20.40px;border-left:1px dotted #d0d0d0;"></div>
<div class="a" style="left:445.00px;top:290.80px;width:0;height:20.40px;border-left:1px dotted #d0d0d0;"></div>
<div class="a" style="left:494.00px;top:290.80px;width:0;height:20.40px;border-left:1px dotted #d0d0d0;"></div>
<div class="a" style="left:579.80px;top:290.80px;width:0;height:20.40px;border-left:1px dotted #d0d0d0;"></div>
<div class="a" style="left:665.20px;top:290.80px;width:0;height:20.40px;border-left:1px dotted #d0d0d0;"></div>
<div class="a" style="left:751.20px;top:290.80px;width:0;height:20.40px;border-left:1px dotted #d0d0d0;"></div>
<div class="a" style="left:53.50px;top:331.10px;width:783.80px;height:0;border-top:1px dotted #d6d6d6;"></div>
<div class="a" style="left:108.50px;top:311.20px;width:0;height:20.40px;border-left:1px dotted #d0d0d0;"></div>
<div class="a" style="left:354.50px;top:311.20px;width:0;height:20.40px;border-left:1px dotted #d0d0d0;"></div>
<div class="a" style="left:396.00px;top:311.20px;width:0;height:20.40px;border-left:1px dotted #d0d0d0;"></div>
<div class="a" style="left:445.00px;top:311.20px;width:0;height:20.40px;border-left:1px dotted #d0d0d0;"></div>
<div class="a" style="left:494.00px;top:311.20px;width:0;height:20.40px;border-left:1px dotted #d0d0d0;"></div>
<div class="a" style="left:579.80px;top:311.20px;width:0;height:20.40px;border-left:1px dotted #d0d0d0;"></div>
<div class="a" style="left:665.20px;top:311.20px;width:0;height:20.40px;border-left:1px dotted #d0d0d0;"></div>
<div class="a" style="left:751.20px;top:311.20px;width:0;height:20.40px;border-left:1px dotted #d0d0d0;"></div>
<div class="a" style="left:53.50px;top:351.50px;width:783.80px;height:0;border-top:1px dotted #d6d6d6;"></div>
<div class="a" style="left:108.50px;top:331.60px;width:0;height:20.40px;border-left:1px dotted #d0d0d0;"></div>
<div class="a" style="left:354.50px;top:331.60px;width:0;height:20.40px;border-left:1px dotted #d0d0d0;"></div>
<div class="a" style="left:396.00px;top:331.60px;width:0;height:20.40px;border-left:1px dotted #d0d0d0;"></div>
<div class="a" style="left:445.00px;top:331.60px;width:0;height:20.40px;border-left:1px dotted #d0d0d0;"></div>
<div class="a" style="left:494.00px;top:331.60px;width:0;height:20.40px;border-left:1px dotted #d0d0d0;"></div>
<div class="a" style="left:579.80px;top:331.60px;width:0;height:20.40px;border-left:1px dotted #d0d0d0;"></div>
<div class="a" style="left:665.20px;top:331.60px;width:0;height:20.40px;border-left:1px dotted #d0d0d0;"></div>
<div class="a" style="left:751.20px;top:331.60px;width:0;height:20.40px;border-left:1px dotted #d0d0d0;"></div>
<div class="t" style="left:55.70px;top:152.87px;">0.361.050</div>
<div class="a" style="left:109.00px;top:148.00px;width:245.50px;height:20.40px;overflow:hidden">
<div class="t" style="left:3.20px;top:4.87px;">Розрахунки з вітчизняними покупцями робіт та послуг</div>
</div>
<div class="t" style="left:375.70px;width:200px;top:152.87px;text-align:right;transform-origin:100% 0;">1 070.00</div>
<div class="t" style="left:461.10px;width:200px;top:152.87px;text-align:right;transform-origin:100% 0;">1 000.00</div>
<div class="t" style="left:547.10px;width:200px;top:152.87px;text-align:right;transform-origin:100% 0;">70.00</div>
<div class="t" style="left:55.70px;top:173.27px;">0.362.010</div>
<div class="a" style="left:109.00px;top:168.40px;width:245.50px;height:20.40px;overflow:hidden">
<div class="t" style="left:3.20px;top:4.87px;">Розрахунки з іноземними покупцями товарів та інших</div>
</div>
<div class="t" style="left:375.70px;width:200px;top:173.27px;text-align:right;transform-origin:100% 0;">1 070.00</div>
<div class="t" style="left:547.10px;width:200px;top:173.27px;text-align:right;transform-origin:100% 0;">1 070.00</div>
<div class="t" style="left:55.70px;top:193.67px;">0.631.010</div>
<div class="a" style="left:109.00px;top:188.80px;width:245.50px;height:20.40px;overflow:hidden">
<div class="t" style="left:3.20px;top:4.87px;">Розрахунки з вітчизняними постачальниками товарів</div>
</div>
<div class="t" style="left:461.10px;width:200px;top:193.67px;text-align:right;transform-origin:100% 0;">360.00</div>
<div class="t" style="left:633.20px;width:200px;top:193.67px;text-align:right;transform-origin:100% 0;">360.00</div>
<div class="t" style="left:55.70px;top:214.07px;">0.631.050</div>
<div class="a" style="left:109.00px;top:209.20px;width:245.50px;height:20.40px;overflow:hidden">
<div class="t" style="left:3.20px;top:4.87px;">Розрахунки з вітчизняними підрядниками з отримання</div>
</div>
<div class="t" style="left:375.70px;width:200px;top:214.07px;text-align:right;transform-origin:100% 0;">1 250.00</div>
<div class="t" style="left:461.10px;width:200px;top:214.07px;text-align:right;transform-origin:100% 0;">10 610.00</div>
<div class="t" style="left:547.10px;width:200px;top:214.07px;text-align:right;transform-origin:100% 0;">1 000.00</div>
<div class="t" style="left:633.20px;width:200px;top:214.07px;text-align:right;transform-origin:100% 0;">10 360.00</div>
<div class="t" style="left:55.70px;top:234.47px;">0.632.010</div>
<div class="a" style="left:109.00px;top:229.60px;width:245.50px;height:20.40px;overflow:hidden">
<div class="t" style="left:3.20px;top:4.87px;">Розрахунки з іноземними постачальниками товарів та</div>
</div>
<div class="t" style="left:461.10px;width:200px;top:234.47px;text-align:right;transform-origin:100% 0;">23 019.41</div>
<div class="t" style="left:633.20px;width:200px;top:234.47px;text-align:right;transform-origin:100% 0;">23 019.41</div>
<div class="t" style="left:55.70px;top:254.87px;color:#ee2f3c;">0.643.020</div>
<div class="a" style="left:109.00px;top:250.00px;width:245.50px;height:20.40px;overflow:hidden">
<div class="t" style="left:3.20px;top:4.87px;color:#ee2f3c;">Податкові зобов'язання до виписки</div>
</div>
<div class="t" style="left:375.70px;width:200px;top:254.87px;text-align:right;transform-origin:100% 0;color:#ee2f3c;">-157.00</div>
<div class="t" style="left:461.10px;width:200px;top:254.87px;text-align:right;transform-origin:100% 0;color:#ee2f3c;">70.00</div>
<div class="t" style="left:633.20px;width:200px;top:254.87px;text-align:right;transform-origin:100% 0;color:#ee2f3c;">227.00</div>
<div class="t" style="left:55.70px;top:275.27px;">0.644.020</div>
<div class="a" style="left:109.00px;top:270.40px;width:245.50px;height:20.40px;overflow:hidden">
<div class="t" style="left:3.20px;top:4.87px;">Податковий кредит до отримання</div>
</div>
<div class="t" style="left:375.70px;width:200px;top:275.27px;text-align:right;transform-origin:100% 0;">1 120.00</div>
<div class="t" style="left:461.10px;width:200px;top:275.27px;text-align:right;transform-origin:100% 0;">4 603.88</div>
<div class="t" style="left:547.10px;width:200px;top:275.27px;text-align:right;transform-origin:100% 0;">660.00</div>
<div class="t" style="left:633.20px;width:200px;top:275.27px;text-align:right;transform-origin:100% 0;">4 143.88</div>
<div class="t" style="left:55.70px;top:295.67px;">0.644.030</div>
<div class="a" style="left:109.00px;top:290.80px;width:245.50px;height:20.40px;overflow:hidden">
<div class="t" style="left:3.20px;top:4.87px;">Корегування податкового кредиту</div>
</div>
<div class="t" style="left:461.10px;width:200px;top:295.67px;text-align:right;transform-origin:100% 0;">156.90</div>
<div class="t" style="left:633.20px;width:200px;top:295.67px;text-align:right;transform-origin:100% 0;">156.90</div>
<div class="t" style="left:55.70px;top:316.07px;">0.702.010</div>
<div class="a" style="left:109.00px;top:311.20px;width:245.50px;height:20.40px;overflow:hidden">
<div class="t" style="left:3.20px;top:4.87px;">Дохід від реалізації товарів</div>
</div>
<div class="t" style="left:461.10px;width:200px;top:316.07px;text-align:right;transform-origin:100% 0;">1 070.00</div>
<div class="t" style="left:633.20px;width:200px;top:316.07px;text-align:right;transform-origin:100% 0;">1 070.00</div>
<div class="t" style="left:55.70px;top:336.47px;">0.703.010</div>
<div class="a" style="left:109.00px;top:331.60px;width:245.50px;height:20.40px;overflow:hidden">
<div class="t" style="left:3.20px;top:4.87px;">Дохід від реалізації робіт і послуг</div>
</div>
<div class="t" style="left:375.70px;width:200px;top:336.47px;text-align:right;transform-origin:100% 0;">1 070.00</div>
<div class="t" style="left:461.10px;width:200px;top:336.47px;text-align:right;transform-origin:100% 0;">1 070.00</div>
<div class="a" style="left:53.50px;top:377.80px;width:783.80px;height:1.00px;background:#d9d9d9;"></div>
<div class="a" style="left:108.50px;top:378.80px;width:0;height:18.70px;border-left:1px dotted #d0d0d0;"></div>
<div class="a" style="left:354.50px;top:378.80px;width:0;height:18.70px;border-left:1px dotted #d0d0d0;"></div>
<div class="a" style="left:396.00px;top:378.80px;width:0;height:18.70px;border-left:1px dotted #d0d0d0;"></div>
<div class="a" style="left:445.00px;top:378.80px;width:0;height:18.70px;border-left:1px dotted #d0d0d0;"></div>
<div class="a" style="left:494.00px;top:378.80px;width:0;height:18.70px;border-left:1px dotted #d0d0d0;"></div>
<div class="a" style="left:579.80px;top:378.80px;width:0;height:18.70px;border-left:1px dotted #d0d0d0;"></div>
<div class="a" style="left:665.20px;top:378.80px;width:0;height:18.70px;border-left:1px dotted #d0d0d0;"></div>
<div class="a" style="left:751.20px;top:378.80px;width:0;height:18.70px;border-left:1px dotted #d0d0d0;"></div>
<div class="t" style="left:112.20px;top:383.17px;">Итого</div>
<div class="t" style="left:240.90px;width:200px;top:383.17px;text-align:right;transform-origin:100% 0;">0.00</div>
<div class="t" style="left:289.90px;width:200px;top:383.17px;text-align:right;transform-origin:100% 0;">0.00</div>
<div class="t" style="left:375.70px;width:200px;top:383.17px;text-align:right;transform-origin:100% 0;">5 423.00</div>
<div class="t" style="left:461.10px;width:200px;top:383.17px;text-align:right;transform-origin:100% 0;">41 960.19</div>
<div class="t" style="left:547.10px;width:200px;top:383.17px;text-align:right;transform-origin:100% 0;">2 800.00</div>
<div class="t" style="left:633.20px;width:200px;top:383.17px;text-align:right;transform-origin:100% 0;">39 337.19</div>
</div>
<div class="w" style="left:0px;top:223px;width:845px;height:407px;opacity:1;">
<div class="a" style="left:46.00px;top:25.00px;width:799.00px;height:382.00px;background:#fff;"></div>
<div class="a" style="left:0.00px;top:0.00px;width:46.00px;height:407.00px;background:#dcefee;"></div>
<div class="a" style="left:0.00px;top:0.00px;width:845.00px;height:1.50px;background:#a9c6ca;"></div>
<div class="a" style="left:0.00px;top:0.00px;width:1.00px;height:407.00px;background:#a9c6ca;"></div>
<div class="a" style="left:843.00px;top:0.00px;width:2.00px;height:407.00px;background:#a9c6ca;"></div>
<div class="a" style="left:0.00px;top:405.00px;width:845.00px;height:2.00px;background:#a9c6ca;"></div>
<div class="a" style="left:45.00px;top:1.00px;width:1.00px;height:404.00px;background:#b1cfd1;"></div>
<div class="a" style="left:3px;top:3px;width:37px;height:37px;border:1.3px solid #3ea891;border-radius:6px;"></div>
<svg class="a" style="left:2px;top:2px" width="42" height="42" viewBox="0 0 42 42"><rect x="11.3" y="7.9" width="18.7" height="25.2" rx="1.8" fill="#14957a"/>
<rect x="14.1" y="12" width="12.9" height="4.3" fill="#e6f4f1"/>
<rect x="14.10" y="19.00" width="2.2" height="1.5" fill="#e6f4f1"/><rect x="17.55" y="19.00" width="2.2" height="1.5" fill="#e6f4f1"/><rect x="21.00" y="19.00" width="2.2" height="1.5" fill="#e6f4f1"/><rect x="24.45" y="19.00" width="2.2" height="1.5" fill="#e6f4f1"/><rect x="14.10" y="21.60" width="2.2" height="1.5" fill="#e6f4f1"/><rect x="17.55" y="21.60" width="2.2" height="1.5" fill="#e6f4f1"/><rect x="21.00" y="21.60" width="2.2" height="1.5" fill="#e6f4f1"/><rect x="24.45" y="21.60" width="2.2" height="1.5" fill="#e6f4f1"/><rect x="14.10" y="24.20" width="2.2" height="1.5" fill="#e6f4f1"/><rect x="17.55" y="24.20" width="2.2" height="1.5" fill="#e6f4f1"/><rect x="21.00" y="24.20" width="2.2" height="1.5" fill="#e6f4f1"/><rect x="24.45" y="24.20" width="2.2" height="1.5" fill="#e6f4f1"/><rect x="14.10" y="26.80" width="2.2" height="1.5" fill="#e6f4f1"/><rect x="17.55" y="26.80" width="2.2" height="1.5" fill="#e6f4f1"/><rect x="21.00" y="26.80" width="2.2" height="1.5" fill="#e6f4f1"/><rect x="24.45" y="26.80" width="2.2" height="1.5" fill="#e6f4f1"/></svg>
<div class="a" style="left:3px;top:48px;width:37px;height:37px;border:1.3px solid #4a76b6;border-radius:6px;"></div>
<svg class="a" style="left:2px;top:47px" width="42" height="42" viewBox="0 0 42 42"><path d="M20.7 8 L34.7 18.4 L6.8 18.4 Z" fill="#3a67ae"/>
<circle cx="20.7" cy="13.7" r="2" fill="#e2f1f0"/>
<rect x="9.3" y="19.4" width="23" height="11.4" fill="#3a67ae"/>
<rect x="12" y="20.6" width="2.3" height="9.6" fill="#e2f1f0"/>
<rect x="17.6" y="20.6" width="6.4" height="9.6" fill="#e2f1f0"/>
<rect x="27" y="20.6" width="2.6" height="9.6" fill="#e2f1f0"/>
<rect x="7.3" y="30.3" width="26.7" height="3.4" fill="#3a67ae"/>
<text x="20.9" y="28.6" font-size="9.5" font-weight="bold" text-anchor="middle" fill="#22a24a" font-family="Liberation Sans">$</text></svg>
<div class="a" style="left:3px;top:93px;width:37px;height:37px;border:1.3px solid #3aa8d4;border-radius:6px;"></div>
<svg class="a" style="left:2px;top:92px" width="42" height="42" viewBox="0 0 42 42"><rect x="7.7" y="10.5" width="26.6" height="16.8" rx="1.5" fill="#e2f1f0" stroke="#4ab0dc" stroke-width="1.2"/>
<rect x="19.3" y="7.6" width="2.6" height="5.9" rx="1.2" fill="#7a7a7a"/>
<circle cx="12.9" cy="16.3" r="1.9" fill="#7a7a7a"/>
<path d="M9.4 23.2 v-2.6 q0-2 2-2 h3.3 q2 0 2 2 v2.6z" fill="#7a7a7a"/>
<rect x="20.7" y="15.4" width="9.7" height="1.3" fill="#8a8a8a"/>
<rect x="20.7" y="18.8" width="9.7" height="1.3" fill="#8a8a8a"/>
<rect x="20.7" y="22.2" width="9.7" height="1.3" fill="#8a8a8a"/>
<rect x="13.5" y="25" width="14.8" height="9.6" rx="1.3" fill="#f6aa3a"/>
<rect x="15" y="26.7" width="2.5" height="2.5" fill="#c89040"/>
<rect x="15" y="30.4" width="12" height="0.9" fill="#b87a30"/>
<rect x="15" y="32.1" width="6" height="0.7" fill="#c88a40"/></svg>
<div class="a" style="left:3px;top:138px;width:37px;height:37px;border:1.3px solid #45a869;border-radius:6px;"></div>
<svg class="a" style="left:2px;top:137px" width="42" height="42" viewBox="0 0 42 42"><rect x="19.8" y="12" width="2" height="20" fill="#7c4e4e"/>
<path d="M9.5 12.1 H32 V13.8 H9.5z" fill="#7c4e4e"/>
<circle cx="20.8" cy="12.2" r="2.1" fill="#7c4e4e"/>
<rect x="15.8" y="30.9" width="10" height="2" rx="1" fill="#7c4e4e"/>
<path d="M11 13.4 L7.2 20.6 M11 13.4 L14.8 20.6 M30.6 13.4 L26.8 20.6 M30.6 13.4 L34.4 20.6" stroke="#7c4e4e" stroke-width="1.1" fill="none"/>
<path d="M6.4 20.6 h9.2 a4.6 5 0 0 1 -9.2 0z" fill="#1e9a4a"/>
<path d="M26 20.6 h9.2 a4.6 5 0 0 1 -9.2 0z" fill="#1e9a4a"/></svg>
<div class="a" style="left:3px;top:183px;width:37px;height:37px;border:1.3px solid #8fc15c;border-radius:6px;"></div>
<svg class="a" style="left:2px;top:182px" width="42" height="42" viewBox="0 0 42 42"><path d="M19.65 20.40 L6.30 26.07 A14.5 14.5 0 0 1 19.65 5.90 Z" fill="#6db4d8"/><path d="M21.15 20.40 L21.15 5.90 A14.5 14.5 0 0 1 34.50 26.07 Z" fill="#7a5353"/><path d="M20.40 21.80 L33.75 27.47 A14.5 14.5 0 0 1 7.05 27.47 Z" fill="#8ab836"/><path d="M9.6 15.8 l3.9-3.6 l3.9 3.6 h-0.9 v3.6 h-6z" fill="#fff"/><rect x="14.3" y="12.4" width="1.3" height="2.2" fill="#fff"/>
<path d="M23.3 16.3 l1.3-3.3 h5 l1.3 3.3 v2.8 h-7.6z" fill="#fff"/><rect x="23.6" y="18.6" width="1.4" height="1.4" fill="#fff"/><rect x="29.2" y="18.6" width="1.4" height="1.4" fill="#fff"/>
<rect x="24.6" y="14" width="5" height="1.6" fill="#7a5353"/>
<text x="20.4" y="32.6" font-size="10" font-weight="bold" text-anchor="middle" fill="#fff" font-family="Liberation Sans">$</text></svg>
<div class="a" style="left:3px;top:228px;width:37px;height:37px;border:1.3px solid #4a5682;border-radius:6px;"></div>
<svg class="a" style="left:2px;top:227px" width="42" height="42" viewBox="0 0 42 42"><rect x="6.7" y="5.8" width="28.3" height="28.6" rx="1" fill="#f27272"/>
<rect x="8" y="16.8" width="25.3" height="16" fill="#e4f1f1"/>
<text x="21" y="14.4" font-size="7" font-weight="bold" text-anchor="middle" fill="#2a3a6a" font-family="Liberation Sans" textLength="15.5" lengthAdjust="spacingAndGlyphs">АВГ</text>
<text x="21.5" y="31" font-size="12.5" font-weight="bold" text-anchor="middle" fill="#1e2e60" font-family="Liberation Sans">23</text></svg>
<div class="a" style="left:3px;top:273px;width:37px;height:37px;border:1.3px solid #92c45e;border-radius:6px;"></div>
<svg class="a" style="left:2px;top:272px" width="42" height="42" viewBox="0 0 42 42"><ellipse cx="19.3" cy="16" rx="11.5" ry="7.5" fill="#7ab22a"/>
<path d="M10 20 L8 26 L16 22z" fill="#7ab22a"/>
<ellipse cx="25" cy="23" rx="7.7" ry="6.5" fill="#fde07a" stroke="#f6a832" stroke-width="0.9"/>
<path d="M29 27.5 L33.3 31 L28 30z" fill="#f6a832"/>
<rect x="21" y="20.6" width="7.5" height="0.9" fill="#f0a030"/>
<rect x="21" y="22.6" width="5" height="0.9" fill="#f0a030"/>
<rect x="21" y="24.8" width="7" height="0.9" fill="#f0a030"/></svg>
<div class="a" style="left:3px;top:318px;width:37px;height:37px;border:1.3px solid #4cb87a;border-radius:6px;"></div>
<svg class="a" style="left:2px;top:317px" width="42" height="42" viewBox="0 0 42 42"><circle cx="20.5" cy="20" r="14.3" fill="#22a35a"/>
<text x="20.5" y="29" font-size="24" font-weight="bold" text-anchor="middle" fill="#fff" font-family="Liberation Sans">?</text></svg>
<div class="a" style="left:3px;top:363px;width:37px;height:37px;border:1.3px solid #4a92d2;border-radius:6px;"></div>
<svg class="a" style="left:2px;top:362px" width="42" height="42" viewBox="0 0 42 42"><circle cx="20.7" cy="12.3" r="6.6" fill="#2a7cc4"/>
<path d="M9.3 27 q0-8.5 6-9.3 q5.4 2.6 10.8 0 q6 0.8 6 9.3 v5 h-22.8z" fill="#2a7cc4"/>
<circle cx="20.7" cy="29.5" r="5" fill="#fff" stroke="#2a7cc4" stroke-width="0.8"/>
<rect x="20" y="28" width="1.4" height="4.3" fill="#2a7cc4"/>
<circle cx="20.7" cy="26.5" r="0.8" fill="#2a7cc4"/></svg>
<div class="a" style="left:46.00px;top:1.50px;width:797.00px;height:22.50px;background:rgba(222,240,240,0.985);"></div>
<div class="a" style="left:46.00px;top:24.00px;width:797.00px;height:1.00px;background:#b5d1d3;"></div>
<div class="a" style="left:50px;top:3.5px;width:30px;height:19.5px;border:1px solid #b5d1d3;border-bottom:none;border-radius:4px 4px 0 0;background:linear-gradient(#eef7f7,#e2f0f0);"></div>
<svg class="a" style="left:57px;top:8px" width="16" height="13" viewBox="0 0 16 13"><rect x="1.5" y="1.5" width="12" height="7.7" fill="#e6f1f5" stroke="#3a88cc" stroke-width="1.3"/><path d="M2.2 2.2 h3 l-3 3z" fill="#a8d0f0"/><rect x="6.3" y="9.5" width="2.4" height="1.5" fill="#3a88cc"/><rect x="4" y="10.6" width="7" height="1.4" rx="0.6" fill="#3a88cc"/></svg>
<div class="a" style="left:85.8px;top:3.5px;width:58.7px;height:22px;border:1px solid #b5d1d3;border-bottom:none;border-radius:4px 4px 0 0;background:linear-gradient(#eef6f7,#fff 85%);"></div>
<svg class="a" style="left:93px;top:8px" width="14" height="14" viewBox="0 0 14 14"><circle cx="7" cy="6.3" r="5.6" fill="#ececec"/><rect x="3.2" y="3" width="1.5" height="6.5" fill="#3a94c8"/><rect x="5.5" y="5" width="2" height="4.5" fill="#3aa07a"/><rect x="8.7" y="2.5" width="1.7" height="7" fill="#d84a30"/></svg>
<div class="t" style="left:108.70px;top:8.46px;font-size:10.8px;line-height:10.8px;color:#284a80;font-weight:bold;transform:scaleX(0.95);">ОСВ</div>
<div class="t" style="left:134.5px;top:9px;font-size:10px;line-height:10px;color:#5a78b8;transform:none">×</div>
<div class="a" style="left:819.00px;top:1.50px;width:1.00px;height:22.50px;background:#b5d1d3;"></div>
<svg class="a" style="left:826.5px;top:10.5px" width="8" height="8" viewBox="0 0 8 8"><path d="M1.6 1.6 L6.2 6.2 M6.2 1.6 L1.6 6.2" stroke="#1a4e9e" stroke-width="1.5"/></svg>
<div class="a" style="left:50.50px;top:29.00px;width:788.00px;height:372.00px;border:1px solid #c3d9db;box-sizing:border-box;background:#fff;"></div>
<div class="a" style="left:51.00px;top:29.00px;width:787.00px;height:25.00px;background:#f2f2f2;border-top:1px solid #bcd3d6;border-bottom:1px solid #c3d9db;box-sizing:border-box;"></div>
<div class="a" style="left:51.00px;top:54.00px;width:1.50px;height:51.00px;background:#b7d0d4;"></div>
<div class="a" style="left:837.00px;top:54.00px;width:1.50px;height:51.00px;background:#b7d0d4;"></div>
<div class="a" style="left:51.00px;top:104.50px;width:787.00px;height:1.00px;background:#b7d0d4;"></div>
<svg class="a" style="left:59px;top:36px" width="9" height="12" viewBox="0 0 9 12"><defs><linearGradient id="pg" x1="0" x2="0" y1="0" y2="1"><stop offset="0" stop-color="#6cc24a"/><stop offset="1" stop-color="#1e8a2a"/></linearGradient></defs><path d="M1 0.6 L7.2 5.6 L1 10.6z" fill="url(#pg)"/></svg>
<div class="t" style="left:72.70px;top:35.97px;">Обновить</div>
<svg class="a" style="left:124.5px;top:35.5px" width="15" height="13" viewBox="0 0 15 13"><rect x="0.5" y="0.5" width="13.5" height="2.6" fill="#2f6fb0"/><rect x="1.2" y="1.1" width="8" height="1.2" fill="#fff"/><rect x="1.5" y="3.1" width="11.5" height="8.9" fill="#fff" stroke="#3a7ab8" stroke-width="1"/><path d="M4.5 3.5 v8.4 M7.5 3.5 v8.4 M10.3 3.5 v8.4 M1.7 6.2 h11 M1.7 9 h11" stroke="#8ab0d8" stroke-width="0.8"/><rect x="8" y="6.6" width="2" height="2" fill="#e05a3a"/></svg>
<div class="t" style="left:140.90px;top:35.97px;">Период</div>
<div class="a" style="left:182.50px;top:35.00px;width:1.00px;height:15.00px;background:#d6d6d6;"></div>
<div class="t" style="left:188.40px;top:35.97px;">Аналитика</div>
<div class="t" style="left:245.50px;top:35.97px;">Счет</div>
<div class="t" style="left:274.60px;top:35.97px;">Динамика</div>
<div class="t" style="left:329.20px;top:35.97px;">Анализ счета</div>
<div class="t" style="left:398.60px;top:35.97px;">Карточка счета</div>
<svg class="a" style="left:751px;top:34px" width="16" height="15" viewBox="0 0 16 15"><defs><linearGradient id="egfront" x1="0" x2="1" y1="1" y2="0"><stop offset="0" stop-color="#f0a828"/><stop offset="1" stop-color="#f8d080"/></linearGradient></defs><path d="M1.1 13.9 C0.9 9.8 3 7 7.2 5.6 L6.9 1.1 L14.2 5.6 L9.6 10.9 L8.9 8 C5.6 9 3.2 10.8 1.1 13.9Z" fill="url(#egfront)" stroke="#e09a28" stroke-width="0.45"/></svg>
<div class="t" style="left:768.00px;top:35.97px;">Экспорт</div>
<svg class="a" style="left:819px;top:34px" width="15" height="15" viewBox="0 0 15 15"><circle cx="7.2" cy="7.5" r="6.7" fill="#1e9e55"/><text x="7.2" y="11.6" font-size="11" font-weight="bold" text-anchor="middle" fill="#fff" font-family="Liberation Sans">?</text></svg>
<div class="t" style="left:-94.20px;width:200px;top:64.87px;text-align:right;transform-origin:100% 0;">Дата с:</div>
<div class="t" style="left:109.50px;top:65.64px;font-size:10px;line-height:10px;color:#e8303a;transform:scaleX(1);">*</div>
<div class="a" style="left:118.10px;top:61.10px;width:76.70px;height:17.65px;border:1px solid #b9d0d4;box-sizing:border-box;border-radius:3px;background:#fff;overflow:hidden">
<div class="a" style="right:0;top:0;bottom:0;width:15px;background:#e9f4f4;"></div>
<svg class="a" style="right:2px;top:2px" width="12" height="13" viewBox="0 0 12 13"><rect x="0.8" y="1.2" width="10.6" height="11" fill="#fff" stroke="#cfcfcf" stroke-width="0.8"/><rect x="0.8" y="1.2" width="10.6" height="3.6" fill="#e85a5a"/><rect x="2.5" y="0.3" width="1.2" height="2" fill="#fff"/><rect x="8.3" y="0.3" width="1.2" height="2" fill="#fff"/><path d="M4 7 h4 M4 9.5 h4" stroke="#c8c8c8" stroke-width="0.8"/></svg>
</div>
<div class="t" style="left:121.60px;top:64.87px;">01/01/2014</div>
<div class="t" style="left:39.20px;width:200px;top:64.87px;text-align:right;transform-origin:100% 0;">Дата по:</div>
<div class="t" style="left:242.40px;top:65.64px;font-size:10px;line-height:10px;color:#e8303a;transform:scaleX(1);">*</div>
<div class="a" style="left:251.00px;top:61.10px;width:76.50px;height:17.65px;border:1px solid #b9d0d4;box-sizing:border-box;border-radius:3px;background:#fff;overflow:hidden">
<div class="a" style="right:0;top:0;bottom:0;width:15px;background:#e9f4f4;"></div>
<svg class="a" style="right:2px;top:2px" width="12" height="13" viewBox="0 0 12 13"><rect x="0.8" y="1.2" width="10.6" height="11" fill="#fff" stroke="#cfcfcf" stroke-width="0.8"/><rect x="0.8" y="1.2" width="10.6" height="3.6" fill="#e85a5a"/><rect x="2.5" y="0.3" width="1.2" height="2" fill="#fff"/><rect x="8.3" y="0.3" width="1.2" height="2" fill="#fff"/><path d="M4 7 h4 M4 9.5 h4" stroke="#c8c8c8" stroke-width="0.8"/></svg>
</div>
<div class="t" style="left:254.50px;top:64.87px;">31/12/2015</div>
<div class="t" style="left:228.50px;width:200px;top:64.87px;text-align:right;transform-origin:100% 0;">Развернутое сальдо:</div>
<div class="a" style="left:432.50px;top:61.40px;width:58.30px;height:15.80px;border:1px solid #b9d0d4;box-sizing:border-box;border-radius:3px;background:#fff;overflow:hidden">
<div class="a" style="right:0;top:0;bottom:0;width:15px;background:#e9f4f4;"></div>
<svg class="a" style="right:3px;top:3.60px" width="10" height="7" viewBox="0 0 10 7"><path d="M1 1.3 L5 5.2 L9 1.3" stroke="#5aaae0" stroke-width="1.5" fill="none"/></svg>
</div>
<div class="t" style="left:436.00px;top:64.87px;">Нет</div>
<div class="t" style="left:346.00px;width:200px;top:64.87px;text-align:right;transform-origin:100% 0;">Аналитика:</div>
<div class="t" style="left:549.70px;top:65.64px;font-size:10px;line-height:10px;color:#e8303a;transform:scaleX(1);">*</div>
<div class="a" style="left:559.00px;top:61.40px;width:98.50px;height:15.80px;border:1px solid #b9d0d4;box-sizing:border-box;border-radius:3px;background:#fff;overflow:hidden">
<div class="a" style="right:0;top:0;bottom:0;width:15px;background:#e9f4f4;"></div>
<svg class="a" style="right:3px;top:3.60px" width="10" height="7" viewBox="0 0 10 7"><path d="M1 1.3 L5 5.2 L9 1.3" stroke="#5aaae0" stroke-width="1.5" fill="none"/></svg>
</div>
<div class="t" style="left:562.50px;top:64.87px;">Клиенты</div>
<div class="a" style="left:665.00px;top:61.20px;width:167.50px;height:16.10px;border:1px solid #b9d0d4;box-sizing:border-box;border-radius:3px;background:#fff;overflow:hidden">
<div class="a" style="right:0;top:0;bottom:0;width:15px;background:#e9f4f4;"></div>
<svg class="a" style="right:3px;top:3.75px" width="10" height="7" viewBox="0 0 10 7"><path d="M1 1.3 L5 5.2 L9 1.3" stroke="#5aaae0" stroke-width="1.5" fill="none"/></svg>
</div>
<div class="t" style="left:668.50px;top:64.87px;">3 СТО Авто-Мир</div>
<svg class="a" style="left:787.5px;top:62.5px" width="28" height="15" viewBox="0 0 28 15"><rect x="0.8" y="1" width="4.2" height="13" rx="0.7" fill="#94c0e8"/><rect x="5.3" y="1" width="4.2" height="13" rx="0.7" fill="#66c0ec"/><rect x="9.8" y="1" width="4.2" height="13" rx="0.7" fill="#94c0e8"/><path d="M1.8 3.6 h2.2 M6.3 3.6 h2.2 M10.8 3.6 h2.2 M2.9 5 v4.5 M7.4 5 v4.5 M11.9 5 v4.5" stroke="#fff" stroke-width="1"/><circle cx="2.9" cy="11.6" r="1" fill="#fff"/><circle cx="7.4" cy="11.6" r="1" fill="#fff"/><circle cx="11.9" cy="11.6" r="1" fill="#fff"/><path d="M16.3 11 L22 5 q1.2-1.1 2.4 0 l1.2 1.1 q1.1 1.1 0 2.3 L20 14 q-1.1 0.9 -2.2 0 l-1.4-1.3 q-0.8-0.8 -0.1-1.7z" fill="#f2f2f6" stroke="#a8a8b0" stroke-width="0.7"/><path d="M16.8 12.5 l1.2 1.2 q0.7 0.4 1.4-0.1" stroke="#555" stroke-width="0.9" fill="none"/></svg>
<div class="t" style="left:228.50px;width:200px;top:84.87px;text-align:right;transform-origin:100% 0;">Фильтр по счетам:</div>
<div class="a" style="left:432.5px;top:83px;width:58.3px;height:14px;border:1px solid #c3d6da;box-sizing:border-box;background:#fff"></div>
<div class="t" style="left:-86.20px;width:200px;top:84.87px;text-align:right;transform-origin:100% 0;">План счетов:</div>
<div class="a" style="left:118.10px;top:81.40px;width:76.70px;height:18.00px;border:1px solid #b9d0d4;box-sizing:border-box;border-radius:3px;background:#fff;overflow:hidden">
<div class="a" style="right:0;top:0;bottom:0;width:15px;background:#e9f4f4;"></div>
<svg class="a" style="right:3px;top:4.70px" width="10" height="7" viewBox="0 0 10 7"><path d="M1 1.3 L5 5.2 L9 1.3" stroke="#5aaae0" stroke-width="1.5" fill="none"/></svg>
</div>
<div class="t" style="left:121.60px;top:84.87px;">0</div>
<div class="t" style="left:46.70px;width:200px;top:84.87px;text-align:right;transform-origin:100% 0;">Шаблоны:</div>
<div class="a" style="left:251.00px;top:81.40px;width:76.50px;height:18.00px;border:1px solid #b9d0d4;box-sizing:border-box;border-radius:3px;background:#fff;overflow:hidden">
<div class="a" style="right:0;top:0;bottom:0;width:15px;background:#e9f4f4;"></div>
<svg class="a" style="right:3px;top:4.70px" width="10" height="7" viewBox="0 0 10 7"><path d="M1 1.3 L5 5.2 L9 1.3" stroke="#5aaae0" stroke-width="1.5" fill="none"/></svg>
</div>
<div class="t" style="left:254.50px;top:84.87px;">Все счета</div>
<div class="t" style="left:346.00px;width:200px;top:84.87px;text-align:right;transform-origin:100% 0;">Группы:</div>
<div class="t" style="left:549.70px;top:85.64px;font-size:10px;line-height:10px;color:#e8303a;transform:scaleX(1);">*</div>
<div class="a" style="left:559.00px;top:82.80px;width:98.50px;height:16.10px;border:1px solid #b9d0d4;box-sizing:border-box;border-radius:3px;background:#fff;overflow:hidden">
<div class="a" style="right:0;top:0;bottom:0;width:15px;background:#e9f4f4;"></div>
<svg class="a" style="right:3px;top:3.75px" width="10" height="7" viewBox="0 0 10 7"><path d="M1 1.3 L5 5.2 L9 1.3" stroke="#5aaae0" stroke-width="1.5" fill="none"/></svg>
</div>
<div class="t" style="left:562.50px;top:84.87px;">Только субсчета</div>
<div class="t" style="left:517.50px;width:200px;top:84.87px;text-align:right;transform-origin:100% 0;">Вал. счета:</div>
<div class="a" style="left:722.00px;top:82.80px;width:110.50px;height:16.70px;border:1px solid #b9d0d4;box-sizing:border-box;border-radius:3px;background:#fff;overflow:hidden">
<div class="a" style="right:0;top:0;bottom:0;width:15px;background:#e9f4f4;"></div>
<svg class="a" style="right:3px;top:4.05px" width="10" height="7" viewBox="0 0 10 7"><path d="M1 1.3 L5 5.2 L9 1.3" stroke="#5aaae0" stroke-width="1.5" fill="none"/></svg>
</div>
<div class="t" style="left:725.50px;top:84.87px;">Без расшифровок</div>
<div class="a" style="left:430.50px;top:78.00px;width:404.80px;height:4.50px;background:#e5443f;"></div>
<div class="a" style="left:52.50px;top:107.50px;width:784.20px;height:291.00px;border:1px solid #a3c0e6;box-sizing:border-box;background:#fff;"></div>
<div class="a" style="left:53.50px;top:108.50px;width:782.20px;height:39.50px;background:linear-gradient(#f8f8f8,#ececec);"></div>
<div class="a" style="left:53.50px;top:147.50px;width:782.20px;height:1.00px;background:#e0e0e0;"></div>
<div class="a" style="left:109.00px;top:108.50px;width:0;height:39.50px;border-left:1px dotted #d0d0d0;"></div>
<div class="a" style="left:353.60px;top:108.50px;width:0;height:39.50px;border-left:1px dotted #d0d0d0;"></div>
<div class="a" style="left:395.20px;top:108.50px;width:0;height:39.50px;border-left:1px dotted #d0d0d0;"></div>
<div class="a" style="left:492.90px;top:108.50px;width:0;height:39.50px;border-left:1px dotted #d0d0d0;"></div>
<div class="a" style="left:664.10px;top:108.50px;width:0;height:39.50px;border-left:1px dotted #d0d0d0;"></div>
<div class="a" style="left:444.20px;top:127.40px;width:0;height:20.60px;border-left:1px dotted #d0d0d0;"></div>
<div class="a" style="left:577.90px;top:127.40px;width:0;height:20.60px;border-left:1px dotted #d0d0d0;"></div>
<div class="a" style="left:749.10px;top:127.40px;width:0;height:20.60px;border-left:1px dotted #d0d0d0;"></div>
<div class="a" style="left:395.70px;top:126.90px;width:440.50px;height:0;border-top:1px dotted #d6d6d6;"></div>
<div class="t" style="left:55.70px;top:121.87px;">Счет</div>
<div class="t" style="left:112.70px;top:121.87px;">Название счета</div>
<div class="t" style="left:357.30px;top:122.07px;">Валюта</div>
<div class="t" style="left:394.20px;width:97.70px;top:112.47px;text-align:center;transform-origin:50% 0;">Начальное сальдо</div>
<div class="t" style="left:491.90px;width:171.20px;top:112.47px;text-align:center;transform-origin:50% 0;">Оборот</div>
<div class="t" style="left:663.10px;width:171.60px;top:112.47px;text-align:center;transform-origin:50% 0;">Конечное сальдо</div>
<div class="t" style="left:238.10px;width:200px;top:132.37px;text-align:right;transform-origin:100% 0;">Дебет</div>
<div class="t" style="left:286.80px;width:200px;top:132.37px;text-align:right;transform-origin:100% 0;">Кредит</div>
<div class="t" style="left:371.80px;width:200px;top:132.37px;text-align:right;transform-origin:100% 0;">Дебет</div>
<div class="t" style="left:458.00px;width:200px;top:132.37px;text-align:right;transform-origin:100% 0;">Кредит</div>
<div class="t" style="left:543.00px;width:200px;top:132.37px;text-align:right;transform-origin:100% 0;">Дебет</div>
<div class="t" style="left:629.60px;width:200px;top:132.37px;text-align:right;transform-origin:100% 0;">Кредит</div>
<div class="a" style="left:53.50px;top:167.90px;width:782.20px;height:0;border-top:1px dotted #d6d6d6;"></div>
<div class="a" style="left:109.00px;top:148.00px;width:0;height:20.40px;border-left:1px dotted #d0d0d0;"></div>
<div class="a" style="left:353.60px;top:148.00px;width:0;height:20.40px;border-left:1px dotted #d0d0d0;"></div>
<div class="a" style="left:395.20px;top:148.00px;width:0;height:20.40px;border-left:1px dotted #d0d0d0;"></div>
<div class="a" style="left:444.20px;top:148.00px;width:0;height:20.40px;border-left:1px dotted #d0d0d0;"></div>
<div class="a" style="left:492.90px;top:148.00px;width:0;height:20.40px;border-left:1px dotted #d0d0d0;"></div>
<div class="a" style="left:577.90px;top:148.00px;width:0;height:20.40px;border-left:1px dotted #d0d0d0;"></div>
<div class="a" style="left:664.10px;top:148.00px;width:0;height:20.40px;border-left:1px dotted #d0d0d0;"></div>
<div class="a" style="left:749.10px;top:148.00px;width:0;height:20.40px;border-left:1px dotted #d0d0d0;"></div>
<div class="a" style="left:53.50px;top:188.30px;width:782.20px;height:0;border-top:1px dotted #d6d6d6;"></div>
<div class="a" style="left:109.00px;top:168.40px;width:0;height:20.40px;border-left:1px dotted #d0d0d0;"></div>
<div class="a" style="left:353.60px;top:168.40px;width:0;height:20.40px;border-left:1px dotted #d0d0d0;"></div>
<div class="a" style="left:395.20px;top:168.40px;width:0;height:20.40px;border-left:1px dotted #d0d0d0;"></div>
<div class="a" style="left:444.20px;top:168.40px;width:0;height:20.40px;border-left:1px dotted #d0d0d0;"></div>
<div class="a" style="left:492.90px;top:168.40px;width:0;height:20.40px;border-left:1px dotted #d0d0d0;"></div>
<div class="a" style="left:577.90px;top:168.40px;width:0;height:20.40px;border-left:1px dotted #d0d0d0;"></div>
<div class="a" style="left:664.10px;top:168.40px;width:0;height:20.40px;border-left:1px dotted #d0d0d0;"></div>
<div class="a" style="left:749.10px;top:168.40px;width:0;height:20.40px;border-left:1px dotted #d0d0d0;"></div>
<div class="a" style="left:53.50px;top:208.70px;width:782.20px;height:0;border-top:1px dotted #d6d6d6;"></div>
<div class="a" style="left:109.00px;top:188.80px;width:0;height:20.40px;border-left:1px dotted #d0d0d0;"></div>
<div class="a" style="left:353.60px;top:188.80px;width:0;height:20.40px;border-left:1px dotted #d0d0d0;"></div>
<div class="a" style="left:395.20px;top:188.80px;width:0;height:20.40px;border-left:1px dotted #d0d0d0;"></div>
<div class="a" style="left:444.20px;top:188.80px;width:0;height:20.40px;border-left:1px dotted #d0d0d0;"></div>
<div class="a" style="left:492.90px;top:188.80px;width:0;height:20.40px;border-left:1px dotted #d0d0d0;"></div>
<div class="a" style="left:577.90px;top:188.80px;width:0;height:20.40px;border-left:1px dotted #d0d0d0;"></div>
<div class="a" style="left:664.10px;top:188.80px;width:0;height:20.40px;border-left:1px dotted #d0d0d0;"></div>
<div class="a" style="left:749.10px;top:188.80px;width:0;height:20.40px;border-left:1px dotted #d0d0d0;"></div>
<div class="a" style="left:53.50px;top:209.20px;width:782.20px;height:20.40px;background:#fde28c;"></div>
<div class="a" style="left:53.50px;top:229.10px;width:782.20px;height:0;border-top:1px dotted #d6d6d6;"></div>
<div class="a" style="left:109.00px;top:209.20px;width:0;height:20.40px;border-left:1px dotted #d0d0d0;"></div>
<div class="a" style="left:353.60px;top:209.20px;width:0;height:20.40px;border-left:1px dotted #d0d0d0;"></div>
<div class="a" style="left:395.20px;top:209.20px;width:0;height:20.40px;border-left:1px dotted #d0d0d0;"></div>
<div class="a" style="left:444.20px;top:209.20px;width:0;height:20.40px;border-left:1px dotted #d0d0d0;"></div>
<div class="a" style="left:492.90px;top:209.20px;width:0;height:20.40px;border-left:1px dotted #d0d0d0;"></div>
<div class="a" style="left:577.90px;top:209.20px;width:0;height:20.40px;border-left:1px dotted #d0d0d0;"></div>
<div class="a" style="left:664.10px;top:209.20px;width:0;height:20.40px;border-left:1px dotted #d0d0d0;"></div>
<div class="a" style="left:749.10px;top:209.20px;width:0;height:20.40px;border-left:1px dotted #d0d0d0;"></div>
<div class="a" style="left:53.50px;top:249.50px;width:782.20px;height:0;border-top:1px dotted #d6d6d6;"></div>
<div class="a" style="left:109.00px;top:229.60px;width:0;height:20.40px;border-left:1px dotted #d0d0d0;"></div>
<div class="a" style="left:353.60px;top:229.60px;width:0;height:20.40px;border-left:1px dotted #d0d0d0;"></div>
<div class="a" style="left:395.20px;top:229.60px;width:0;height:20.40px;border-left:1px dotted #d0d0d0;"></div>
<div class="a" style="left:444.20px;top:229.60px;width:0;height:20.40px;border-left:1px dotted #d0d0d0;"></div>
<div class="a" style="left:492.90px;top:229.60px;width:0;height:20.40px;border-left:1px dotted #d0d0d0;"></div>
<div class="a" style="left:577.90px;top:229.60px;width:0;height:20.40px;border-left:1px dotted #d0d0d0;"></div>
<div class="a" style="left:664.10px;top:229.60px;width:0;height:20.40px;border-left:1px dotted #d0d0d0;"></div>
<div class="a" style="left:749.10px;top:229.60px;width:0;height:20.40px;border-left:1px dotted #d0d0d0;"></div>
<div class="a" style="left:53.50px;top:269.90px;width:782.20px;height:0;border-top:1px dotted #d6d6d6;"></div>
<div class="a" style="left:109.00px;top:250.00px;width:0;height:20.40px;border-left:1px dotted #d0d0d0;"></div>
<div class="a" style="left:353.60px;top:250.00px;width:0;height:20.40px;border-left:1px dotted #d0d0d0;"></div>
<div class="a" style="left:395.20px;top:250.00px;width:0;height:20.40px;border-left:1px dotted #d0d0d0;"></div>
<div class="a" style="left:444.20px;top:250.00px;width:0;height:20.40px;border-left:1px dotted #d0d0d0;"></div>
<div class="a" style="left:492.90px;top:250.00px;width:0;height:20.40px;border-left:1px dotted #d0d0d0;"></div>
<div class="a" style="left:577.90px;top:250.00px;width:0;height:20.40px;border-left:1px dotted #d0d0d0;"></div>
<div class="a" style="left:664.10px;top:250.00px;width:0;height:20.40px;border-left:1px dotted #d0d0d0;"></div>
<div class="a" style="left:749.10px;top:250.00px;width:0;height:20.40px;border-left:1px dotted #d0d0d0;"></div>
<div class="a" style="left:53.50px;top:290.30px;width:782.20px;height:0;border-top:1px dotted #d6d6d6;"></div>
<div class="a" style="left:109.00px;top:270.40px;width:0;height:20.40px;border-left:1px dotted #d0d0d0;"></div>
<div class="a" style="left:353.60px;top:270.40px;width:0;height:20.40px;border-left:1px dotted #d0d0d0;"></div>
<div class="a" style="left:395.20px;top:270.40px;width:0;height:20.40px;border-left:1px dotted #d0d0d0;"></div>
<div class="a" style="left:444.20px;top:270.40px;width:0;height:20.40px;border-left:1px dotted #d0d0d0;"></div>
<div class="a" style="left:492.90px;top:270.40px;width:0;height:20.40px;border-left:1px dotted #d0d0d0;"></div>
<div class="a" style="left:577.90px;top:270.40px;width:0;height:20.40px;border-left:1px dotted #d0d0d0;"></div>
<div class="a" style="left:664.10px;top:270.40px;width:0;height:20.40px;border-left:1px dotted #d0d0d0;"></div>
<div class="a" style="left:749.10px;top:270.40px;width:0;height:20.40px;border-left:1px dotted #d0d0d0;"></div>
<div class="a" style="left:53.50px;top:310.70px;width:782.20px;height:0;border-top:1px dotted #d6d6d6;"></div>
<div class="a" style="left:109.00px;top:290.80px;width:0;height:20.40px;border-left:1px dotted #d0d0d0;"></div>
<div class="a" style="left:353.60px;top:290.80px;width:0;height:20.40px;border-left:1px dotted #d0d0d0;"></div>
<div class="a" style="left:395.20px;top:290.80px;width:0;height:20.40px;border-left:1px dotted #d0d0d0;"></div>
<div class="a" style="left:444.20px;top:290.80px;width:0;height:20.40px;border-left:1px dotted #d0d0d0;"></div>
<div class="a" style="left:492.90px;top:290.80px;width:0;height:20.40px;border-left:1px dotted #d0d0d0;"></div>
<div class="a" style="left:577.90px;top:290.80px;width:0;height:20.40px;border-left:1px dotted #d0d0d0;"></div>
<div class="a" style="left:664.10px;top:290.80px;width:0;height:20.40px;border-left:1px dotted #d0d0d0;"></div>
<div class="a" style="left:749.10px;top:290.80px;width:0;height:20.40px;border-left:1px dotted #d0d0d0;"></div>
<div class="a" style="left:53.50px;top:331.10px;width:782.20px;height:0;border-top:1px dotted #d6d6d6;"></div>
<div class="a" style="left:109.00px;top:311.20px;width:0;height:20.40px;border-left:1px dotted #d0d0d0;"></div>
<div class="a" style="left:353.60px;top:311.20px;width:0;height:20.40px;border-left:1px dotted #d0d0d0;"></div>
<div class="a" style="left:395.20px;top:311.20px;width:0;height:20.40px;border-left:1px dotted #d0d0d0;"></div>
<div class="a" style="left:444.20px;top:311.20px;width:0;height:20.40px;border-left:1px dotted #d0d0d0;"></div>
<div class="a" style="left:492.90px;top:311.20px;width:0;height:20.40px;border-left:1px dotted #d0d0d0;"></div>
<div class="a" style="left:577.90px;top:311.20px;width:0;height:20.40px;border-left:1px dotted #d0d0d0;"></div>
<div class="a" style="left:664.10px;top:311.20px;width:0;height:20.40px;border-left:1px dotted #d0d0d0;"></div>
<div class="a" style="left:749.10px;top:311.20px;width:0;height:20.40px;border-left:1px dotted #d0d0d0;"></div>
<div class="a" style="left:53.50px;top:351.50px;width:782.20px;height:0;border-top:1px dotted #d6d6d6;"></div>
<div class="a" style="left:109.00px;top:331.60px;width:0;height:20.40px;border-left:1px dotted #d0d0d0;"></div>
<div class="a" style="left:353.60px;top:331.60px;width:0;height:20.40px;border-left:1px dotted #d0d0d0;"></div>
<div class="a" style="left:395.20px;top:331.60px;width:0;height:20.40px;border-left:1px dotted #d0d0d0;"></div>
<div class="a" style="left:444.20px;top:331.60px;width:0;height:20.40px;border-left:1px dotted #d0d0d0;"></div>
<div class="a" style="left:492.90px;top:331.60px;width:0;height:20.40px;border-left:1px dotted #d0d0d0;"></div>
<div class="a" style="left:577.90px;top:331.60px;width:0;height:20.40px;border-left:1px dotted #d0d0d0;"></div>
<div class="a" style="left:664.10px;top:331.60px;width:0;height:20.40px;border-left:1px dotted #d0d0d0;"></div>
<div class="a" style="left:749.10px;top:331.60px;width:0;height:20.40px;border-left:1px dotted #d0d0d0;"></div>
<div class="t" style="left:55.70px;top:152.87px;">0.361.050</div>
<div class="a" style="left:109.50px;top:148.00px;width:244.10px;height:20.40px;overflow:hidden">
<div class="t" style="left:3.20px;top:4.87px;">Розрахунки з вітчизняними покупцями робіт та послуг</div>
</div>
<div class="t" style="left:373.80px;width:200px;top:152.87px;text-align:right;transform-origin:100% 0;">1 070.00</div>
<div class="t" style="left:460.00px;width:200px;top:152.87px;text-align:right;transform-origin:100% 0;">1 000.00</div>
<div class="t" style="left:545.00px;width:200px;top:152.87px;text-align:right;transform-origin:100% 0;">70.00</div>
<div class="t" style="left:55.70px;top:173.27px;">0.362.010</div>
<div class="a" style="left:109.50px;top:168.40px;width:244.10px;height:20.40px;overflow:hidden">
<div class="t" style="left:3.20px;top:4.87px;">Розрахунки з іноземними покупцями товарів та інших</div>
</div>
<div class="t" style="left:373.80px;width:200px;top:173.27px;text-align:right;transform-origin:100% 0;">1 070.00</div>
<div class="t" style="left:545.00px;width:200px;top:173.27px;text-align:right;transform-origin:100% 0;">1 070.00</div>
<div class="t" style="left:55.70px;top:193.67px;">0.631.010</div>
<div class="a" style="left:109.50px;top:188.80px;width:244.10px;height:20.40px;overflow:hidden">
<div class="t" style="left:3.20px;top:4.87px;">Розрахунки з вітчизняними постачальниками товарів</div>
</div>
<div class="t" style="left:460.00px;width:200px;top:193.67px;text-align:right;transform-origin:100% 0;">360.00</div>
<div class="t" style="left:631.60px;width:200px;top:193.67px;text-align:right;transform-origin:100% 0;">360.00</div>
<div class="t" style="left:55.70px;top:214.07px;">0.631.050</div>
<div class="a" style="left:109.50px;top:209.20px;width:244.10px;height:20.40px;overflow:hidden">
<div class="t" style="left:3.20px;top:4.87px;">Розрахунки з вітчизняними підрядниками з отримання</div>
</div>
<div class="t" style="left:460.00px;width:200px;top:214.07px;text-align:right;transform-origin:100% 0;">9 360.00</div>
<div class="t" style="left:631.60px;width:200px;top:214.07px;text-align:right;transform-origin:100% 0;">9 360.00</div>
<div class="t" style="left:55.70px;top:234.47px;">0.632.010</div>
<div class="a" style="left:109.50px;top:229.60px;width:244.10px;height:20.40px;overflow:hidden">
<div class="t" style="left:3.20px;top:4.87px;">Розрахунки з іноземними постачальниками товарів та</div>
</div>
<div class="t" style="left:460.00px;width:200px;top:234.47px;text-align:right;transform-origin:100% 0;">23 019.41</div>
<div class="t" style="left:631.60px;width:200px;top:234.47px;text-align:right;transform-origin:100% 0;">23 019.41</div>
<div class="t" style="left:55.70px;top:254.87px;color:#ee2f3c;">0.643.020</div>
<div class="a" style="left:109.50px;top:250.00px;width:244.10px;height:20.40px;overflow:hidden">
<div class="t" style="left:3.20px;top:4.87px;color:#ee2f3c;">Податкові зобов'язання до виписки</div>
</div>
<div class="t" style="left:373.80px;width:200px;top:254.87px;text-align:right;transform-origin:100% 0;color:#ee2f3c;">-157.00</div>
<div class="t" style="left:460.00px;width:200px;top:254.87px;text-align:right;transform-origin:100% 0;color:#ee2f3c;">70.00</div>
<div class="t" style="left:631.60px;width:200px;top:254.87px;text-align:right;transform-origin:100% 0;color:#ee2f3c;">227.00</div>
<div class="t" style="left:55.70px;top:275.27px;">0.644.020</div>
<div class="a" style="left:109.50px;top:270.40px;width:244.10px;height:20.40px;overflow:hidden">
<div class="t" style="left:3.20px;top:4.87px;">Податковий кредит до отримання</div>
</div>
<div class="t" style="left:373.80px;width:200px;top:275.27px;text-align:right;transform-origin:100% 0;">1 120.00</div>
<div class="t" style="left:460.00px;width:200px;top:275.27px;text-align:right;transform-origin:100% 0;">4 603.88</div>
<div class="t" style="left:631.60px;width:200px;top:275.27px;text-align:right;transform-origin:100% 0;">3 483.88</div>
<div class="t" style="left:55.70px;top:295.67px;">0.644.030</div>
<div class="a" style="left:109.50px;top:290.80px;width:244.10px;height:20.40px;overflow:hidden">
<div class="t" style="left:3.20px;top:4.87px;">Корегування податкового кредиту</div>
</div>
<div class="t" style="left:460.00px;width:200px;top:295.67px;text-align:right;transform-origin:100% 0;">156.90</div>
<div class="t" style="left:631.60px;width:200px;top:295.67px;text-align:right;transform-origin:100% 0;">156.90</div>
<div class="t" style="left:55.70px;top:316.07px;">0.702.010</div>
<div class="a" style="left:109.50px;top:311.20px;width:244.10px;height:20.40px;overflow:hidden">
<div class="t" style="left:3.20px;top:4.87px;">Дохід від реалізації товарів</div>
</div>
<div class="t" style="left:460.00px;width:200px;top:316.07px;text-align:right;transform-origin:100% 0;">1 070.00</div>
<div class="t" style="left:631.60px;width:200px;top:316.07px;text-align:right;transform-origin:100% 0;">1 070.00</div>
<div class="t" style="left:55.70px;top:336.47px;">0.703.010</div>
<div class="a" style="left:109.50px;top:331.60px;width:244.10px;height:20.40px;overflow:hidden">
<div class="t" style="left:3.20px;top:4.87px;">Дохід від реалізації робіт і послуг</div>
</div>
<div class="t" style="left:373.80px;width:200px;top:336.47px;text-align:right;transform-origin:100% 0;">1 070.00</div>
<div class="t" style="left:460.00px;width:200px;top:336.47px;text-align:right;transform-origin:100% 0;">1 070.00</div>
<div class="a" style="left:53.50px;top:377.80px;width:782.20px;height:1.00px;background:#d9d9d9;"></div>
<div class="a" style="left:109.00px;top:378.80px;width:0;height:18.70px;border-left:1px dotted #d0d0d0;"></div>
<div class="a" style="left:353.60px;top:378.80px;width:0;height:18.70px;border-left:1px dotted #d0d0d0;"></div>
<div class="a" style="left:395.20px;top:378.80px;width:0;height:18.70px;border-left:1px dotted #d0d0d0;"></div>
<div class="a" style="left:444.20px;top:378.80px;width:0;height:18.70px;border-left:1px dotted #d0d0d0;"></div>
<div class="a" style="left:492.90px;top:378.80px;width:0;height:18.70px;border-left:1px dotted #d0d0d0;"></div>
<div class="a" style="left:577.90px;top:378.80px;width:0;height:18.70px;border-left:1px dotted #d0d0d0;"></div>
<div class="a" style="left:664.10px;top:378.80px;width:0;height:18.70px;border-left:1px dotted #d0d0d0;"></div>
<div class="a" style="left:749.10px;top:378.80px;width:0;height:18.70px;border-left:1px dotted #d0d0d0;"></div>
<div class="t" style="left:112.70px;top:383.17px;">Итого</div>
<div class="t" style="left:240.10px;width:200px;top:383.17px;text-align:right;transform-origin:100% 0;">0.00</div>
<div class="t" style="left:288.80px;width:200px;top:383.17px;text-align:right;transform-origin:100% 0;">0.00</div>
<div class="t" style="left:373.80px;width:200px;top:383.17px;text-align:right;transform-origin:100% 0;">4 173.00</div>
<div class="t" style="left:460.00px;width:200px;top:383.17px;text-align:right;transform-origin:100% 0;">40 710.19</div>
<div class="t" style="left:545.00px;width:200px;top:383.17px;text-align:right;transform-origin:100% 0;">1 140.00</div>
<div class="t" style="left:631.60px;width:200px;top:383.17px;text-align:right;transform-origin:100% 0;">37 677.19</div>
</div>
</body></html>
